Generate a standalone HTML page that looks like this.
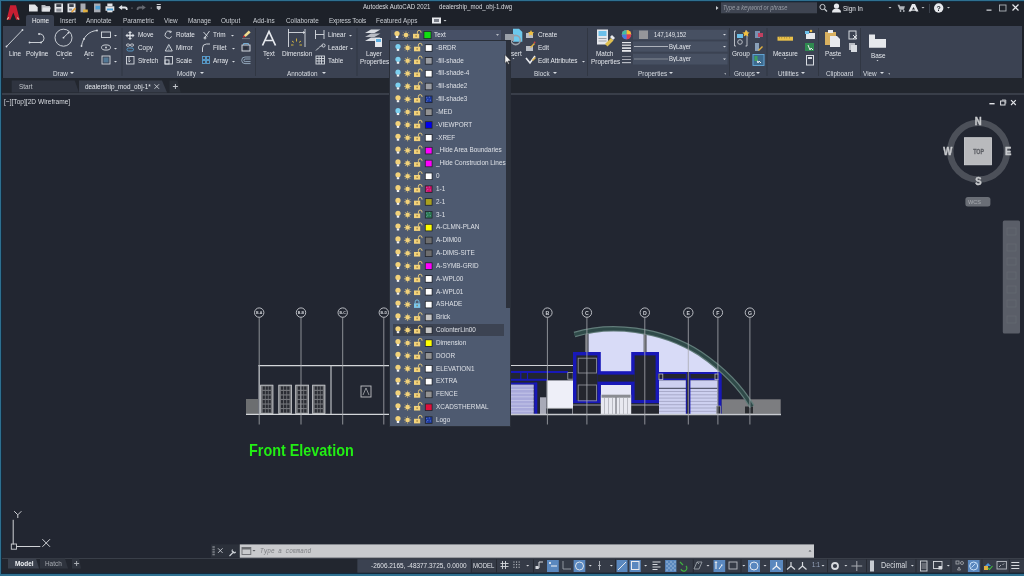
<!DOCTYPE html>
<html><head><meta charset="utf-8">
<style>
*{margin:0;padding:0;box-sizing:border-box}
html,body{width:1024px;height:576px;overflow:hidden;background:#1d2129}
body{font-family:"Liberation Sans",sans-serif;color:#e0e3e8;position:relative}
.a{position:absolute}
.t,.rl,.pl{will-change:transform;transform-origin:50% 50%}
.t{position:absolute;white-space:nowrap;line-height:1;transform:scaleY(1.15)}
svg{position:absolute;overflow:visible}
</style></head><body>
<!-- frame borders -->
<div class="a" style="left:0;top:0;width:1024px;height:576px;background:#1d2129"></div>

<!-- ribbon panel -->
<div class="a" id="ribbon" style="left:3px;top:26px;width:1019px;height:52px;background:#3b4252"></div>
<!-- home tab -->
<div class="a" style="left:26px;top:15px;width:28px;height:12px;background:#3b4252;border-radius:2px 2px 0 0"></div>

<!-- file tab row -->
<div class="a" style="left:2px;top:78px;width:1022px;height:15px;background:#22262e"></div>
<svg style="left:0;top:0" width="200" height="96">
<path d="M11.7 80.4h63l4.3 12.1h-67.3z" fill="#2f3440"/>
<path d="M79 80.4h83l5 12.1h-88z" fill="#383e4b"/>
<path d="M169.5 80.4h8l3.2 12.1h-11.2z" fill="#2b3039"/>
<path d="M154.5 84.3l4.5 4.5M159 84.3l-4.5 4.5" stroke="#d0d4da" stroke-width="0.9"/>
<path d="M175.4 84v5M172.9 86.5h5" stroke="#c0c4ca" stroke-width="1"/>
</svg>
<div class="t" style="left:19px;top:83.6px;font-size:6.4px;color:#c0c4ca">Start</div>
<div class="t" style="left:85px;top:83.6px;font-size:6.4px;color:#e6e9ee">dealership_mod_obj-1*</div>
<div class="a" style="left:2px;top:92.5px;width:1022px;height:2px;background:#393e49"></div>

<!-- viewport -->
<div class="a" id="vp" style="left:2px;top:94.5px;width:1022px;height:463px;background:#222631"></div>
<div class="t" style="left:3.7px;top:98.8px;font-size:6.6px;color:#d8dbe0">[−][Top][2D Wireframe]</div>
<!-- VIEWPORT CONTENT -->
<svg style="left:0;top:0" width="1024" height="576">
<rect x="246" y="399" width="12" height="15" fill="#6c6e70"/>
<path d="M258.5 365.6H392" stroke="#d4d6da" stroke-width="1.4"/>
<path d="M246 414.4H392" stroke="#d4d6da" stroke-width="1.4"/>
<path d="M259.2 365V414M331 365V414" stroke="#c8cacf" stroke-width="1.1"/>
<rect x="260.2" y="384.8" width="13.1" height="29" fill="#74767b"/>
<rect x="260.6" y="385.2" width="12.3" height="28.4" fill="none" stroke="#c4c6ca" stroke-width="0.8"/>
<rect x="262.70" y="386.40" width="2.17" height="3.4" fill="#2a2c33"/>
<rect x="262.70" y="390.95" width="2.17" height="3.4" fill="#2a2c33"/>
<rect x="262.70" y="395.50" width="2.17" height="3.4" fill="#2a2c33"/>
<rect x="262.70" y="400.05" width="2.17" height="3.4" fill="#2a2c33"/>
<rect x="262.70" y="404.60" width="2.17" height="3.4" fill="#2a2c33"/>
<rect x="262.70" y="409.15" width="2.17" height="3.4" fill="#2a2c33"/>
<rect x="265.67" y="386.40" width="2.17" height="3.4" fill="#2a2c33"/>
<rect x="265.67" y="390.95" width="2.17" height="3.4" fill="#2a2c33"/>
<rect x="265.67" y="395.50" width="2.17" height="3.4" fill="#2a2c33"/>
<rect x="265.67" y="400.05" width="2.17" height="3.4" fill="#2a2c33"/>
<rect x="265.67" y="404.60" width="2.17" height="3.4" fill="#2a2c33"/>
<rect x="265.67" y="409.15" width="2.17" height="3.4" fill="#2a2c33"/>
<rect x="268.63" y="386.40" width="2.17" height="3.4" fill="#2a2c33"/>
<rect x="268.63" y="390.95" width="2.17" height="3.4" fill="#2a2c33"/>
<rect x="268.63" y="395.50" width="2.17" height="3.4" fill="#2a2c33"/>
<rect x="268.63" y="400.05" width="2.17" height="3.4" fill="#2a2c33"/>
<rect x="268.63" y="404.60" width="2.17" height="3.4" fill="#2a2c33"/>
<rect x="268.63" y="409.15" width="2.17" height="3.4" fill="#2a2c33"/>
<rect x="278.4" y="384.8" width="13.6" height="29" fill="#74767b"/>
<rect x="278.8" y="385.2" width="12.8" height="28.4" fill="none" stroke="#c4c6ca" stroke-width="0.8"/>
<rect x="280.90" y="386.40" width="2.33" height="3.4" fill="#2a2c33"/>
<rect x="280.90" y="390.95" width="2.33" height="3.4" fill="#2a2c33"/>
<rect x="280.90" y="395.50" width="2.33" height="3.4" fill="#2a2c33"/>
<rect x="280.90" y="400.05" width="2.33" height="3.4" fill="#2a2c33"/>
<rect x="280.90" y="404.60" width="2.33" height="3.4" fill="#2a2c33"/>
<rect x="280.90" y="409.15" width="2.33" height="3.4" fill="#2a2c33"/>
<rect x="284.03" y="386.40" width="2.33" height="3.4" fill="#2a2c33"/>
<rect x="284.03" y="390.95" width="2.33" height="3.4" fill="#2a2c33"/>
<rect x="284.03" y="395.50" width="2.33" height="3.4" fill="#2a2c33"/>
<rect x="284.03" y="400.05" width="2.33" height="3.4" fill="#2a2c33"/>
<rect x="284.03" y="404.60" width="2.33" height="3.4" fill="#2a2c33"/>
<rect x="284.03" y="409.15" width="2.33" height="3.4" fill="#2a2c33"/>
<rect x="287.17" y="386.40" width="2.33" height="3.4" fill="#2a2c33"/>
<rect x="287.17" y="390.95" width="2.33" height="3.4" fill="#2a2c33"/>
<rect x="287.17" y="395.50" width="2.33" height="3.4" fill="#2a2c33"/>
<rect x="287.17" y="400.05" width="2.33" height="3.4" fill="#2a2c33"/>
<rect x="287.17" y="404.60" width="2.33" height="3.4" fill="#2a2c33"/>
<rect x="287.17" y="409.15" width="2.33" height="3.4" fill="#2a2c33"/>
<rect x="295.3" y="384.8" width="13.7" height="29" fill="#74767b"/>
<rect x="295.7" y="385.2" width="12.9" height="28.4" fill="none" stroke="#c4c6ca" stroke-width="0.8"/>
<rect x="297.80" y="386.40" width="2.37" height="3.4" fill="#2a2c33"/>
<rect x="297.80" y="390.95" width="2.37" height="3.4" fill="#2a2c33"/>
<rect x="297.80" y="395.50" width="2.37" height="3.4" fill="#2a2c33"/>
<rect x="297.80" y="400.05" width="2.37" height="3.4" fill="#2a2c33"/>
<rect x="297.80" y="404.60" width="2.37" height="3.4" fill="#2a2c33"/>
<rect x="297.80" y="409.15" width="2.37" height="3.4" fill="#2a2c33"/>
<rect x="300.97" y="386.40" width="2.37" height="3.4" fill="#2a2c33"/>
<rect x="300.97" y="390.95" width="2.37" height="3.4" fill="#2a2c33"/>
<rect x="300.97" y="395.50" width="2.37" height="3.4" fill="#2a2c33"/>
<rect x="300.97" y="400.05" width="2.37" height="3.4" fill="#2a2c33"/>
<rect x="300.97" y="404.60" width="2.37" height="3.4" fill="#2a2c33"/>
<rect x="300.97" y="409.15" width="2.37" height="3.4" fill="#2a2c33"/>
<rect x="304.13" y="386.40" width="2.37" height="3.4" fill="#2a2c33"/>
<rect x="304.13" y="390.95" width="2.37" height="3.4" fill="#2a2c33"/>
<rect x="304.13" y="395.50" width="2.37" height="3.4" fill="#2a2c33"/>
<rect x="304.13" y="400.05" width="2.37" height="3.4" fill="#2a2c33"/>
<rect x="304.13" y="404.60" width="2.37" height="3.4" fill="#2a2c33"/>
<rect x="304.13" y="409.15" width="2.37" height="3.4" fill="#2a2c33"/>
<rect x="312.2" y="384.8" width="13.1" height="29" fill="#74767b"/>
<rect x="312.6" y="385.2" width="12.3" height="28.4" fill="none" stroke="#c4c6ca" stroke-width="0.8"/>
<rect x="314.70" y="386.40" width="2.17" height="3.4" fill="#2a2c33"/>
<rect x="314.70" y="390.95" width="2.17" height="3.4" fill="#2a2c33"/>
<rect x="314.70" y="395.50" width="2.17" height="3.4" fill="#2a2c33"/>
<rect x="314.70" y="400.05" width="2.17" height="3.4" fill="#2a2c33"/>
<rect x="314.70" y="404.60" width="2.17" height="3.4" fill="#2a2c33"/>
<rect x="314.70" y="409.15" width="2.17" height="3.4" fill="#2a2c33"/>
<rect x="317.67" y="386.40" width="2.17" height="3.4" fill="#2a2c33"/>
<rect x="317.67" y="390.95" width="2.17" height="3.4" fill="#2a2c33"/>
<rect x="317.67" y="395.50" width="2.17" height="3.4" fill="#2a2c33"/>
<rect x="317.67" y="400.05" width="2.17" height="3.4" fill="#2a2c33"/>
<rect x="317.67" y="404.60" width="2.17" height="3.4" fill="#2a2c33"/>
<rect x="317.67" y="409.15" width="2.17" height="3.4" fill="#2a2c33"/>
<rect x="320.63" y="386.40" width="2.17" height="3.4" fill="#2a2c33"/>
<rect x="320.63" y="390.95" width="2.17" height="3.4" fill="#2a2c33"/>
<rect x="320.63" y="395.50" width="2.17" height="3.4" fill="#2a2c33"/>
<rect x="320.63" y="400.05" width="2.17" height="3.4" fill="#2a2c33"/>
<rect x="320.63" y="404.60" width="2.17" height="3.4" fill="#2a2c33"/>
<rect x="320.63" y="409.15" width="2.17" height="3.4" fill="#2a2c33"/>
<rect x="361" y="386" width="10" height="11" fill="none" stroke="#c0c2c6" stroke-width="0.9"/>
<path d="M363 395l3-7 3 7" fill="none" stroke="#c0c2c6" stroke-width="0.7"/>
<defs><clipPath id="vault"><path d="M574.5 334.5 C610 323.5, 660 328, 700 353.5 C725 370.5, 742 389.5, 752 406.5 L752 420 L574.5 420 Z"/></clipPath></defs>
<rect x="588.5" y="320" width="140" height="52" fill="#d8dbf7" clip-path="url(#vault)"/>
<path d="M510 365.5H573.5" stroke="#d0d2d6" stroke-width="1.2"/>
<rect x="510" y="371" width="58" height="2" fill="#1818b8"/>
<rect x="510" y="378.8" width="37" height="2" fill="#1818b8"/>
<path d="M520.8 372V380M527.5 372V380" stroke="#1818b8" stroke-width="1.2"/>
<rect x="567.8" y="372.6" width="5.4" height="6.6" fill="none" stroke="#a8abb0" stroke-width="0.8"/>
<rect x="510" y="384.3" width="23.7" height="29.9" fill="#a9aadb"/>
<path d="M510 386.0H533.7" stroke="#d8d9f2" stroke-width="0.8" opacity="0.7"/>
<path d="M510 389.6H533.7" stroke="#d8d9f2" stroke-width="0.8" opacity="0.7"/>
<path d="M510 393.2H533.7" stroke="#d8d9f2" stroke-width="0.8" opacity="0.7"/>
<path d="M510 396.8H533.7" stroke="#d8d9f2" stroke-width="0.8" opacity="0.7"/>
<path d="M510 400.4H533.7" stroke="#d8d9f2" stroke-width="0.8" opacity="0.7"/>
<path d="M510 404.0H533.7" stroke="#d8d9f2" stroke-width="0.8" opacity="0.7"/>
<path d="M510 407.6H533.7" stroke="#d8d9f2" stroke-width="0.8" opacity="0.7"/>
<path d="M510 411.2H533.7" stroke="#d8d9f2" stroke-width="0.8" opacity="0.7"/>
<rect x="510" y="382.6" width="27" height="1.8" fill="#1818b8"/>
<rect x="534.3" y="382.6" width="3" height="31.6" fill="#1818b8"/>
<rect x="540" y="397.3" width="6.2" height="16.7" fill="#a8aab8"/>
<rect x="546.7" y="380.4" width="26.5" height="27.6" fill="#eeeff8"/>
<path d="M546.7 408.2H573.2" stroke="#d0d2d6" stroke-width="0.9"/>
<path d="M572.7 408V414" stroke="#c0c2c6" stroke-width="0.8"/>
<rect x="585" y="334" width="2.6" height="18.5" fill="#6a6c72"/>
<rect x="643.6" y="333" width="3" height="20" fill="#55575d"/>
<rect x="600.8" y="385" width="30.4" height="10" fill="#e6e7f6"/>
<rect x="573" y="352" width="27.8" height="51.4" fill="#1818b8"/>
<rect x="576.4" y="355.4" width="21.0" height="44.6" fill="#24262e"/>
<rect x="631.2" y="352" width="27.8" height="51.4" fill="#1818b8"/>
<rect x="634.6" y="355.4" width="21.0" height="44.6" fill="#24262e"/>
<rect x="598.6" y="371.2" width="34.8" height="13.8" fill="#1818b8"/>
<rect x="597.4" y="374.6" width="37.2" height="7" fill="#24262e"/>
<rect x="578.2" y="358.2" width="18.3" height="14.8" fill="none" stroke="#8c8e94" stroke-width="0.9"/>
<rect x="578.2" y="385" width="18.3" height="15.8" fill="none" stroke="#8c8e94" stroke-width="0.9"/>
<rect x="573" y="403.4" width="86" height="10.6" fill="#24262e"/>
<path d="M573 405H600.8M631.2 405H659" stroke="#a8aab0" stroke-width="0.9"/>
<rect x="600.8" y="394.7" width="30.4" height="19.3" fill="#e8e9f0"/>
<rect x="601.5" y="394.7" width="29" height="3" fill="#8a8c92"/>
<path d="M604.5 398V414" stroke="#9a9ca4" stroke-width="0.6"/>
<path d="M608.5 398V414" stroke="#9a9ca4" stroke-width="0.6"/>
<path d="M612.5 398V414" stroke="#9a9ca4" stroke-width="0.6"/>
<path d="M616 398V414" stroke="#9a9ca4" stroke-width="0.6"/>
<path d="M619.5 398V414" stroke="#9a9ca4" stroke-width="0.6"/>
<path d="M623.5 398V414" stroke="#9a9ca4" stroke-width="0.6"/>
<path d="M627.5 398V414" stroke="#9a9ca4" stroke-width="0.6"/>
<path d="M616 397V414" stroke="#70727a" stroke-width="1"/>
<rect x="658" y="372" width="63" height="8.3" fill="#1818b8"/>
<rect x="658" y="374" width="63" height="4.5" fill="#24262e"/>
<rect x="659" y="374" width="3.8" height="5.6" fill="none" stroke="#b8bac0" stroke-width="0.8"/>
<rect x="715" y="374" width="4" height="5.6" fill="none" stroke="#b8bac0" stroke-width="0.8"/>
<rect x="659" y="380.3" width="58.6" height="33.9" fill="#cdd0f0"/>
<path d="M659 388.3H717.6" stroke="#3a3c50" stroke-width="1"/>
<path d="M659 391.5H717.6" stroke="#8e90b0" stroke-width="0.6"/>
<path d="M659 394.8H717.6" stroke="#8e90b0" stroke-width="0.6"/>
<path d="M659 398.1H717.6" stroke="#8e90b0" stroke-width="0.6"/>
<path d="M659 401.4H717.6" stroke="#8e90b0" stroke-width="0.6"/>
<path d="M659 404.7H717.6" stroke="#8e90b0" stroke-width="0.6"/>
<path d="M659 408.0H717.6" stroke="#8e90b0" stroke-width="0.6"/>
<path d="M659 411.3H717.6" stroke="#8e90b0" stroke-width="0.6"/>
<rect x="685.8" y="372" width="4.6" height="42" fill="#1818b8"/>
<rect x="686.8" y="372" width="2.6" height="42" fill="#24262e"/>
<rect x="718.4" y="371.6" width="3.3" height="42.4" fill="#1818b8"/>
<rect x="716.5" y="406" width="4" height="8" fill="#24262e" stroke="#b0b2b8" stroke-width="0.6"/>
<rect x="721.7" y="399.3" width="59" height="14.6" fill="#7c7d80"/>
<rect x="745" y="406.5" width="8" height="7" fill="#2a2c30"/>
<path d="M574.5 334.5 C610 323.5, 660 328, 700 353.5 C725 370.5, 742 389.5, 752 406.5" fill="none" stroke="#627c7a" stroke-width="5.6"/>
<path d="M574.5 334.5 C610 323.5, 660 328, 700 353.5 C725 370.5, 742 389.5, 752 406.5" fill="none" stroke="#2f4a49" stroke-width="3.2"/>
<path d="M510 414.5H781" stroke="#c8cacf" stroke-width="1.3"/>
<path d="M259.2 317.5V424.5" stroke="#a8abb0" stroke-width="0.8"/>
<circle cx="259.2" cy="312.6" r="4.7" fill="none" stroke="#c8cbd0" stroke-width="0.9"/>
<text x="259.2" y="314.0" font-size="3.6" text-anchor="middle" fill="#d0d3d8" font-family="Liberation Sans" font-weight="bold">B-A</text>
<path d="M301 317.5V424.5" stroke="#a8abb0" stroke-width="0.8"/>
<circle cx="301" cy="312.6" r="4.7" fill="none" stroke="#c8cbd0" stroke-width="0.9"/>
<text x="301" y="314.0" font-size="3.6" text-anchor="middle" fill="#d0d3d8" font-family="Liberation Sans" font-weight="bold">B-B</text>
<path d="M342.7 317.5V424.5" stroke="#a8abb0" stroke-width="0.8"/>
<circle cx="342.7" cy="312.6" r="4.7" fill="none" stroke="#c8cbd0" stroke-width="0.9"/>
<text x="342.7" y="314.0" font-size="3.6" text-anchor="middle" fill="#d0d3d8" font-family="Liberation Sans" font-weight="bold">B-C</text>
<path d="M383.8 317.5V424.5" stroke="#a8abb0" stroke-width="0.8"/>
<circle cx="383.8" cy="312.6" r="4.7" fill="none" stroke="#c8cbd0" stroke-width="0.9"/>
<text x="383.8" y="314.0" font-size="3.6" text-anchor="middle" fill="#d0d3d8" font-family="Liberation Sans" font-weight="bold">B-D</text>
<path d="M547.4 317.5V424.5" stroke="#a8abb0" stroke-width="0.8"/>
<circle cx="547.4" cy="312.6" r="4.7" fill="none" stroke="#c8cbd0" stroke-width="0.9"/>
<text x="547.4" y="314.5" font-size="5.2" text-anchor="middle" fill="#d0d3d8" font-family="Liberation Sans" font-weight="bold">B</text>
<path d="M586.9 317.5V424.5" stroke="#a8abb0" stroke-width="0.8"/>
<circle cx="586.9" cy="312.6" r="4.7" fill="none" stroke="#c8cbd0" stroke-width="0.9"/>
<text x="586.9" y="314.5" font-size="5.2" text-anchor="middle" fill="#d0d3d8" font-family="Liberation Sans" font-weight="bold">C</text>
<path d="M644.8 317.5V424.5" stroke="#a8abb0" stroke-width="0.8"/>
<circle cx="644.8" cy="312.6" r="4.7" fill="none" stroke="#c8cbd0" stroke-width="0.9"/>
<text x="644.8" y="314.5" font-size="5.2" text-anchor="middle" fill="#d0d3d8" font-family="Liberation Sans" font-weight="bold">D</text>
<path d="M688.3 317.5V424.5" stroke="#a8abb0" stroke-width="0.8"/>
<circle cx="688.3" cy="312.6" r="4.7" fill="none" stroke="#c8cbd0" stroke-width="0.9"/>
<text x="688.3" y="314.5" font-size="5.2" text-anchor="middle" fill="#d0d3d8" font-family="Liberation Sans" font-weight="bold">E</text>
<path d="M717.9 317.5V424.5" stroke="#a8abb0" stroke-width="0.8"/>
<circle cx="717.9" cy="312.6" r="4.7" fill="none" stroke="#c8cbd0" stroke-width="0.9"/>
<text x="717.9" y="314.5" font-size="5.2" text-anchor="middle" fill="#d0d3d8" font-family="Liberation Sans" font-weight="bold">F</text>
<path d="M749.9 317.5V424.5" stroke="#a8abb0" stroke-width="0.8"/>
<circle cx="749.9" cy="312.6" r="4.7" fill="none" stroke="#c8cbd0" stroke-width="0.9"/>
<text x="749.9" y="314.5" font-size="5.2" text-anchor="middle" fill="#d0d3d8" font-family="Liberation Sans" font-weight="bold">G</text>
<path d="M13.2 519.8V544.5M16.5 546.5H40.3" stroke="#d0d2d6" stroke-width="1"/>
<rect x="11.3" y="544" width="5.2" height="5.2" fill="none" stroke="#d0d2d6" stroke-width="0.9"/>
<path d="M14.2 511.2l3.6 3.6 3.6-3.6M17.8 514.8v3.2" fill="none" stroke="#d0d2d6" stroke-width="1"/>
<path d="M42.4 539.2l7.6 7.6M50 539.2l-7.6 7.6" stroke="#d0d2d6" stroke-width="1"/>
<circle cx="978.6" cy="151.2" r="28.3" fill="none" stroke="#4c5059" stroke-width="6.4"/>
<rect x="964.4" y="137.7" width="27.1" height="27.1" fill="#b9babd" stroke="#d4d5d8" stroke-width="0.8"/>
<text transform="translate(978.6,154.4) scale(0.95,1.35)" font-size="5.6" text-anchor="middle" fill="#5e6066" stroke="#5e6066" stroke-width="0.2" font-family="Liberation Sans" font-weight="bold">TOP</text>
<text transform="translate(978.2,125.3) scale(1.0,1.12)" font-size="9.6" text-anchor="middle" fill="#c8cacd" stroke="#c8cacd" stroke-width="0.35" font-family="Liberation Sans" font-weight="bold">N</text>
<text transform="translate(978.4,185.2) scale(1.0,1.12)" font-size="9.6" text-anchor="middle" fill="#c8cacd" stroke="#c8cacd" stroke-width="0.35" font-family="Liberation Sans" font-weight="bold">S</text>
<text transform="translate(947.8,154.8) scale(1.0,1.12)" font-size="9.6" text-anchor="middle" fill="#c8cacd" stroke="#c8cacd" stroke-width="0.35" font-family="Liberation Sans" font-weight="bold">W</text>
<text transform="translate(1008.3,154.8) scale(1.0,1.12)" font-size="9.6" text-anchor="middle" fill="#c8cacd" stroke="#c8cacd" stroke-width="0.35" font-family="Liberation Sans" font-weight="bold">E</text>
<rect x="965.4" y="197" width="25" height="9.5" rx="2.5" fill="#6a6e76"/>
<text x="974.5" y="204" font-size="5.6" text-anchor="middle" fill="#a8abb0" font-family="Liberation Sans">WCS</text>
<rect x="989.4" y="103" width="5.2" height="1.4" fill="#e0e2e6"/>
<rect x="1000.6" y="101" width="4.4" height="4" fill="none" stroke="#e0e2e6" stroke-width="1"/><path d="M1002 100h3.8v3.6" fill="none" stroke="#e0e2e6" stroke-width="0.8"/>
<path d="M1011 100.2l4.8 4.8M1015.8 100.2l-4.8 4.8" stroke="#e6e8ec" stroke-width="1.1"/>
<rect x="1002.8" y="220.4" width="17.2" height="113" rx="1.5" fill="#5a5e68"/>
<rect x="1007" y="228" width="9" height="7" fill="none" stroke="#666a72" stroke-width="0.7"/>
<rect x="1007" y="244" width="9" height="7" fill="none" stroke="#666a72" stroke-width="0.7"/>
<rect x="1007" y="258" width="9" height="7" fill="none" stroke="#666a72" stroke-width="0.7"/>
<rect x="1007" y="272" width="9" height="7" fill="none" stroke="#666a72" stroke-width="0.7"/>
<rect x="1007" y="286" width="9" height="7" fill="none" stroke="#666a72" stroke-width="0.7"/>
<rect x="1007" y="300" width="9" height="7" fill="none" stroke="#666a72" stroke-width="0.7"/>
<rect x="1007" y="316" width="9" height="7" fill="none" stroke="#666a72" stroke-width="0.7"/>
</svg>
<div class="t" style="left:248.8px;top:442.9px;font-size:14.4px;font-weight:bold;color:#22ee14">Front Elevation</div>
<!-- END VP -->
<!-- STATUS BAR -->
<div class="a" style="left:2px;top:557.5px;width:1022px;height:16px;background:#22262f"></div>
<div class="a" style="left:2px;top:557.8px;width:1022px;height:1px;background:#3a3f49"></div>
<svg style="left:0;top:0" width="1024" height="576">
<path d="M8 558.5h28l3 10h-31z" fill="#3a404c"/>
<path d="M40 558.5h25l3 10h-28z" fill="#2f343e"/>
<path d="M72 558.5h7l2 10h-9z" fill="#2f343e"/>
<path d="M76.6 561v5M74.1 563.5h5" stroke="#a8acb2" stroke-width="1"/>
<rect x="211" y="544.4" width="29" height="13.3" fill="#2b303a"/>
<g fill="#7a7e86"><rect x="212.4" y="546.2" width="2.4" height="1.6"/><rect x="212.4" y="548.7" width="2.4" height="1.6"/><rect x="212.4" y="551.2" width="2.4" height="1.6"/><rect x="212.4" y="553.7" width="2.4" height="1.6"/></g>
<path d="M218 548.3l4.6 4.6M222.6 548.3l-4.6 4.6" stroke="#c8ccd2" stroke-width="0.9"/>
<path d="M229.5 556l4.5-4.5M232.5 549.5a2 2 0 1 0 3.2 2.4" fill="none" stroke="#d0d4da" stroke-width="1.1"/>
<rect x="239.8" y="544.4" width="574.2" height="13.3" fill="#c9cacd"/>
<rect x="242" y="547.5" width="8.8" height="7" fill="none" stroke="#6a6c70" stroke-width="0.9"/><rect x="242" y="547.5" width="8.8" height="2" fill="#6a6c70"/>
<path d="M252.5 550h3l-1.5 1.5z" fill="#55575c"/>
<path d="M808.5 551.5h3l-1.5-1.5z" fill="#55575c"/>
<rect x="357.5" y="559.3" width="666.5" height="13.2" fill="#353b47"/>
<rect x="470.8" y="559.3" width="1" height="13.2" fill="#262a33"/>
<rect x="496" y="559.3" width="1" height="13.2" fill="#262a33"/>
<rect x="533" y="559.3" width="1" height="13.2" fill="#262a33"/>
<rect x="615" y="559.3" width="1" height="13.2" fill="#262a33"/>
<rect x="692.8" y="559.3" width="1" height="13.2" fill="#262a33"/>
<rect x="740.5" y="559.3" width="1" height="13.2" fill="#262a33"/>
<rect x="786" y="559.3" width="1" height="13.2" fill="#262a33"/>
<rect x="827" y="559.3" width="1" height="13.2" fill="#262a33"/>
<rect x="866" y="559.3" width="1" height="13.2" fill="#262a33"/>
<rect x="915.5" y="559.3" width="1" height="13.2" fill="#262a33"/>
<rect x="950.5" y="559.3" width="1" height="13.2" fill="#262a33"/>
<rect x="981.5" y="559.3" width="1" height="13.2" fill="#262a33"/>
<rect x="1008.8" y="559.3" width="1" height="13.2" fill="#262a33"/>
<rect x="357.5" y="559.3" width="113" height="13.2" fill="#3b4251"/>
<rect x="547" y="560" width="11.8" height="12" fill="#5a88bf"/>
<rect x="573.6" y="560" width="11.7" height="12" fill="#5a88bf"/>
<rect x="616.6" y="560" width="10.9" height="12" fill="#5a88bf"/>
<rect x="629.5" y="560" width="11.3" height="12" fill="#5a88bf"/>
<rect x="665.1" y="560" width="11.3" height="12" fill="#5a88bf"/>
<rect x="713.5" y="560" width="11.7" height="12" fill="#5a88bf"/>
<rect x="748" y="560" width="12.0" height="12" fill="#5a88bf"/>
<rect x="770" y="560" width="13.0" height="12" fill="#5a88bf"/>
<rect x="967.9" y="560" width="11.7" height="12" fill="#5a88bf"/>
<path d="M500.5 563.5h8M500.5 566.5h8M502.5 561v8M505.5 561v8" stroke="#d6d9de" stroke-width="0.9"/>
<g fill="#c0c4ca"><rect x="513.4" y="561.5" width="1.1" height="1.1"/><rect x="513.4" y="564.1" width="1.1" height="1.1"/><rect x="513.4" y="566.7" width="1.1" height="1.1"/><rect x="516.0" y="561.5" width="1.1" height="1.1"/><rect x="516.0" y="564.1" width="1.1" height="1.1"/><rect x="516.0" y="566.7" width="1.1" height="1.1"/><rect x="518.6" y="561.5" width="1.1" height="1.1"/><rect x="518.6" y="564.1" width="1.1" height="1.1"/><rect x="518.6" y="566.7" width="1.1" height="1.1"/></g>
<path d="M526.2 565h3l-1.5 1.5z" fill="#d6d9de"/>
<path d="M588.8 565h3l-1.5 1.5z" fill="#d6d9de"/>
<path d="M609.9 565h3l-1.5 1.5z" fill="#d6d9de"/>
<path d="M644.1 565h3l-1.5 1.5z" fill="#d6d9de"/>
<path d="M706.5 565h3l-1.5 1.5z" fill="#d6d9de"/>
<path d="M742.3 565h3l-1.5 1.5z" fill="#d6d9de"/>
<path d="M763.5 565h3l-1.5 1.5z" fill="#d6d9de"/>
<path d="M821.5 565h3l-1.5 1.5z" fill="#d6d9de"/>
<path d="M844.4 565h3l-1.5 1.5z" fill="#d6d9de"/>
<path d="M910.9 565h3l-1.5 1.5z" fill="#d6d9de"/>
<path d="M946.8 565h3l-1.5 1.5z" fill="#d6d9de"/>
<path d="M536 568h3v-6h4" fill="none" stroke="#d6d9de" stroke-width="1"/><rect x="535.5" y="566" width="3" height="3" fill="#d6d9de"/>
<path d="M549 563h2M550 562v2M551 566h6" stroke="#f0f2f5" stroke-width="1.2"/>
<path d="M563 561v8h8" fill="none" stroke="#9aa0a8" stroke-width="0.9"/>
<circle cx="579.5" cy="566" r="4" fill="none" stroke="#dfe3e8" stroke-width="1"/>
<path d="M599.5 561v9M598 565.5h3" stroke="#b8bcc4" stroke-width="0.9"/>
<path d="M618 570l8-8" stroke="#e8eaee" stroke-width="1"/>
<rect x="631.5" y="561.5" width="7.5" height="8" fill="none" stroke="#e8eaee" stroke-width="1"/>
<path d="M652.5 562h8M652.5 564.5h5M652.5 567h8M652.5 569.5h5" stroke="#d6d9de" stroke-width="1"/>
<g fill="#dfe8f4"><rect x="666.5" y="561.5" width="1" height="1"/><rect x="666.5" y="565.5" width="1" height="1"/><rect x="666.5" y="569.5" width="1" height="1"/><rect x="668.5" y="563.5" width="1" height="1"/><rect x="668.5" y="567.5" width="1" height="1"/><rect x="670.5" y="561.5" width="1" height="1"/><rect x="670.5" y="565.5" width="1" height="1"/><rect x="670.5" y="569.5" width="1" height="1"/><rect x="672.5" y="563.5" width="1" height="1"/><rect x="672.5" y="567.5" width="1" height="1"/><rect x="674.5" y="561.5" width="1" height="1"/><rect x="674.5" y="565.5" width="1" height="1"/><rect x="674.5" y="569.5" width="1" height="1"/></g>
<path d="M680 562l3 3M681 569a3 3 0 1 0 5 -3" fill="none" stroke="#40b040" stroke-width="1.2"/>
<path d="M694 569l3-7h5l-3 7z M697 562l2 2" fill="none" stroke="#9aa0a8" stroke-width="0.9"/>
<path d="M716 569v-7M715 563l1-1.5 1 1.5M719 569l3-4M721 565h1.5" stroke="#f0f2f5" stroke-width="1"/>
<rect x="729" y="562" width="8" height="7" fill="none" stroke="#b8bcc4" stroke-width="0.9"/>
<circle cx="754" cy="566" r="4" fill="none" stroke="#e0e8f2" stroke-width="1"/>
<path d="M776.5 562v4l-4 3.5M776.5 566l4 3.5" fill="none" stroke="#f0f2f5" stroke-width="1.2"/>
<path d="M791 562v4l-4 3.5M791 566l4 3.5" fill="none" stroke="#d6d9de" stroke-width="1.2"/>
<path d="M802.5 562v4l-4 3.5M802.5 566l4 3.5" fill="none" stroke="#d6d9de" stroke-width="1.2"/>
<circle cx="835" cy="566" r="3" fill="none" stroke="#d6d9de" stroke-width="1.8"/>
<path d="M856.8 561v10M851.4 566h10.8" stroke="#a8acb2" stroke-width="1"/>
<rect x="870" y="560.5" width="4" height="11" fill="#c8ccd2"/>
<rect x="920.5" y="561" width="6.5" height="10" fill="none" stroke="#d6d9de" stroke-width="0.9"/><path d="M921.5 564h5M921.5 566h5M921.5 568h5" stroke="#d6d9de" stroke-width="0.6"/>
<rect x="933.5" y="561.5" width="8.5" height="7" fill="none" stroke="#d6d9de" stroke-width="0.9"/><rect x="938.5" y="566" width="3.5" height="3.5" fill="#d6d9de"/>
<rect x="956" y="561" width="3" height="3" fill="none" stroke="#a8acb2" stroke-width="0.8"/><circle cx="962" cy="563" r="1.5" fill="none" stroke="#a8acb2" stroke-width="0.8"/><path d="M957.5 570l1.5-3 1.5 3z" fill="none" stroke="#a8acb2" stroke-width="0.8"/>
<circle cx="973.7" cy="566" r="4" fill="none" stroke="#c8e0f8" stroke-width="1"/><path d="M971.5 567.5l4-4" stroke="#c8e0f8" stroke-width="0.9"/>
<path d="M985 566l3-3 3 3z" fill="#4a90d8"/><rect x="984" y="566" width="4" height="4" fill="#e0b040"/><path d="M988 568l1.5 1.5 3-3.5" stroke="#40c040" stroke-width="1.1" fill="none"/>
<rect x="997" y="561.5" width="9.4" height="7.5" fill="none" stroke="#b8bcc4" stroke-width="0.9"/><path d="M999 567l2-2M1004 563.5l-1.5 1.5" stroke="#b8bcc4" stroke-width="0.9"/>
<path d="M1011.3 562.5h8M1011.3 565.5h8M1011.3 568.5h8" stroke="#d6d9de" stroke-width="1"/>
</svg>
<div class="t" style="left:15px;top:560.5px;font-size:6.4px;font-weight:bold;color:#f0f2f5">Model</div>
<div class="t" style="left:45px;top:560.5px;font-size:6.4px;color:#a8acb2">Hatch</div>
<div class="t" style="left:260px;top:548.6px;font-size:6.1px;font-style:italic;font-family:'Liberation Mono';color:#7c7e82">Type a command</div>
<div class="t" style="left:370.8px;top:562.6px;font-size:6.45px;color:#e0e3e8">-2606.2165, -48377.3725, 0.0000</div>
<div class="t" style="left:472.7px;top:562.6px;font-size:6px;color:#e0e3e8">MODEL</div>
<div class="t" style="left:812.3px;top:562.8px;font-size:5.8px;color:#9aa8c0">1:1</div>
<div class="t" style="left:880.8px;top:562.3px;font-size:7.2px;color:#d8dbe0">Decimal</div>
<!-- END SB -->
<!-- TITLE BAR -->
<div class="t" style="left:363px;top:4px;font-size:6.1px;color:#d8dbe0">Autodesk AutoCAD 2021</div>
<div class="t" style="left:438.5px;top:4px;font-size:6.1px;color:#d8dbe0">dealership_mod_obj-1.dwg</div>
<!-- logo A -->
<svg style="left:0;top:0" width="30" height="26" viewBox="0 0 30 26">
<path d="M10.2 5.2H16L19.8 19.8H16.2L13.3 12.5L10.4 19.8H6.6Z" fill="#c81e32"/>
<path d="M7.2 19.5l1.6-2.2M18.8 19.5l-1.5-2" stroke="#d8c8a0" stroke-width="1.1"/>
</svg>
<!-- quick access icons -->
<svg style="left:0;top:0" width="170" height="16">
<g fill="#e2e4e8">
<path d="M29 4.5h6l2.7 2.7v4.3H29z"/>
<path d="M41.5 5h3.5l1 1h4v5.5h-8.5z" fill="#b9bcc2"/><path d="M42.8 7.5h8l-1.2 4h-7.5z" fill="#e2e4e8"/>
<rect x="54.5" y="3.5" width="8.5" height="8.8"/><rect x="56.3" y="4.2" width="5" height="2.8" fill="#3a3f49"/><rect x="56.3" y="8.6" width="5" height="3" fill="#8a8e96"/>
<rect x="67.5" y="3.5" width="8" height="8.8"/><rect x="69.2" y="4.2" width="4.5" height="2.8" fill="#3a3f49"/><path d="M71 11.5l4-4 1.2 1.2-4 4z" fill="#e0a040"/><rect x="69" y="8.6" width="3" height="2" fill="#8a8e96"/>
<rect x="80.5" y="3.5" width="5" height="8.8" fill="#a8acb4"/><path d="M83 9.5h4.8v2.8H83z" fill="#e0b040"/>
<rect x="94" y="3.5" width="6.5" height="8.8" fill="#a8acb4"/><rect x="95.5" y="5.8" width="4.5" height="3.6" fill="#4aa0d8"/>
<path d="M105.5 6.3h8.8v4.5h-8.8z"/><rect x="107.3" y="3.5" width="5.2" height="2.5"/><rect x="106.8" y="8.5" width="6.2" height="2.2" fill="#4aa0d8"/><rect x="107.3" y="10.5" width="5.2" height="1.8"/>
<path d="M118.5 7.6l3.6-2.6v1.6h3a2.5 2.5 0 0 1 2.5 2.5v.8h-1.6a1.4 1.4 0 0 0-1.4-1.4h-2.5v1.6z"/>
<circle cx="132" cy="8" r="0.6" fill="#9ea2aa"/>
<path d="M145.8 7.6l-3.6-2.6v1.6h-3a2.5 2.5 0 0 0-2.5 2.5v.8h1.6a1.4 1.4 0 0 1 1.4-1.4h2.5v1.6z" fill="#666a72"/>
<circle cx="151.2" cy="8" r="0.6" fill="#9ea2aa"/>
<path d="M156.7 4h4.1v1h-4.1z M156.7 6h4.1v2.5l-2 1.8-2.1-1.8z" fill="#c8cbd0"/>
</g>
</svg>
<!-- search -->
<svg style="left:0;top:0" width="1024" height="16">
<path d="M716 6l2.5 2-2.5 2z" fill="#c8cbd0"/>
<rect x="721" y="2.3" width="96" height="11" fill="#3f4552"/>
<circle cx="822.5" cy="7" r="2.6" fill="none" stroke="#c8cbd0" stroke-width="1"/><path d="M824.5 9l2.5 2.5" stroke="#c8cbd0" stroke-width="1.2"/>
<circle cx="836.5" cy="6" r="2.6" fill="#e6e8ec"/><path d="M832 12.5c0-3 2-4 4.5-4s4.5 1 4.5 4z" fill="#e6e8ec"/>
<path d="M888.5 7h3l-1.5 1.5z" fill="#c8cbd0"/>
<path d="M897.5 4.8h2l.6 1.4h4.8l-1 3.6h-4.2z" fill="#b0b4ba"/><circle cx="900.5" cy="11" r="0.9" fill="#b0b4ba"/><circle cx="903.8" cy="11" r="0.9" fill="#b0b4ba"/>
<path d="M912 4h3l3.5 7.5h-2.5l-2.5-4.5-2.5 4.5h-2.5z" fill="#e6e8ec"/><path d="M911 9.5h5v1.2h-5z" fill="#e6e8ec"/>
<path d="M921.5 7h3l-1.5 1.5z" fill="#c8cbd0"/>
<rect x="929" y="4" width="0.8" height="9" fill="#444a55"/>
<circle cx="938.7" cy="8" r="4.7" fill="#e6e8ec"/><text x="938.7" y="10.5" font-size="7" font-weight="bold" text-anchor="middle" fill="#1d2129" font-family="Liberation Sans">?</text>
<path d="M947 7h3l-1.5 1.5z" fill="#c8cbd0"/>
<rect x="986.5" y="9.5" width="5" height="1.3" fill="#c8cbd0"/>
<rect x="999.5" y="5" width="6.5" height="6" fill="none" stroke="#b0b4ba" stroke-width="0.9"/>
<path d="M1012.5 4.5l6 6M1018.5 4.5l-6 6" stroke="#e6e8ec" stroke-width="1.2"/>
</svg>
<div class="t" style="left:723px;top:5.6px;font-size:5.6px;font-style:italic;color:#9a9fa8">Type a keyword or phrase</div>
<div class="t" style="left:843px;top:6px;font-size:6.4px;color:#e0e3e8">Sign In</div>

<!-- RIBBON TABS -->
<div class="t" style="left:32px;top:18px;font-size:6.4px;color:#f0f2f5">Home</div>
<div class="t" style="left:59.5px;top:18px;font-size:6.4px;color:#c8ccd2">Insert</div>
<div class="t" style="left:86px;top:18px;font-size:6.4px;color:#c8ccd2">Annotate</div>
<div class="t" style="left:122.5px;top:18px;font-size:6.4px;color:#c8ccd2">Parametric</div>
<div class="t" style="left:164px;top:18px;font-size:6.4px;color:#c8ccd2">View</div>
<div class="t" style="left:187.5px;top:18px;font-size:6.4px;color:#c8ccd2">Manage</div>
<div class="t" style="left:221px;top:18px;font-size:6.4px;color:#c8ccd2">Output</div>
<div class="t" style="left:253px;top:18px;font-size:6.4px;color:#c8ccd2">Add-ins</div>
<div class="t" style="left:285.5px;top:18px;font-size:6.4px;color:#c8ccd2">Collaborate</div>
<div class="t" style="left:328.5px;top:18px;font-size:6.4px;letter-spacing:-0.2px;color:#c8ccd2">Express Tools</div>
<div class="t" style="left:376px;top:18px;font-size:6.4px;color:#c8ccd2">Featured Apps</div>
<svg style="left:0;top:0" width="460" height="26"><rect x="432" y="17.5" width="9" height="6" fill="#e6e8ec"/><rect x="434" y="19" width="5" height="3" fill="#7a7e88"/><path d="M443.5 20h3l-1.5 1.5z" fill="#c8cbd0"/></svg>


<!-- RIBBON CONTENT -->
<style>
.rl{position:absolute;white-space:nowrap;line-height:1;font-size:6.4px;color:#e4e7ec;transform:translateY(0.6px) scaleY(1.15)}
.pl{position:absolute;white-space:nowrap;line-height:1;font-size:6.4px;color:#d8dce2;transform:translateY(0.6px) scaleY(1.15)}
</style>
<svg style="left:0;top:0" width="1024" height="80">
<g fill="#313743">
<rect x="121.5" y="28" width="1" height="48"/>
<rect x="255" y="28" width="1" height="48"/>
<rect x="356.5" y="28" width="1" height="48"/>
<rect x="587" y="28" width="1" height="48"/>
<rect x="729" y="28" width="1" height="48"/>
<rect x="766.5" y="28" width="1" height="48"/>
<rect x="818" y="28" width="1" height="48"/>
<rect x="860" y="28" width="1" height="48"/>
</g>
<g fill="#d8dce2" stroke="none">
<!-- dropdown arrows for panel labels -->
<path d="M70 72h4l-2 2z"/><path d="M200 72h4l-2 2z"/><path d="M322 72h4l-2 2z"/><path d="M553 72h4l-2 2z"/><path d="M669 72h4l-2 2z"/><path d="M756 72h4l-2 2z"/><path d="M801 72h4l-2 2z"/><path d="M880 72h4l-2 2z"/>
<path d="M724 73l2 0l0 2z" fill="#9aa0a8"/><path d="M888 73l2 0l0 2z" fill="#9aa0a8"/>
<!-- small arrows under big buttons -->
<path d="M62.5 58h2l-1 1.2z"/><path d="M87 58h2l-1 1.2z"/><path d="M267 58h2l-1 1.2z"/><path d="M512.5 58h2l-1 1.2z"/><path d="M784 58h2l-1 1.2z"/><path d="M832 58h2l-1 1.2z"/><path d="M876.5 60h2l-1 1.2z"/>
<!-- split arrows -->
<path d="M114 35h3l-1.5 1.5z"/><path d="M114 48h3l-1.5 1.5z"/><path d="M114 61h3l-1.5 1.5z"/>
<path d="M231 35h3l-1.5 1.5z"/><path d="M232 48h3l-1.5 1.5z"/><path d="M232 61h3l-1.5 1.5z"/>
<path d="M349 35h3l-1.5 1.5z"/><path d="M350 48h3l-1.5 1.5z"/>
<path d="M582 61h3l-1.5 1.5z"/>
</g>
<g fill="none" stroke="#d8dce2" stroke-width="0.9">
<!-- Line -->
<path d="M6.5 46.5L22.5 30"/>
<!-- Polyline -->
<path d="M29.5 42.5h11.5a4.5 4.5 0 0 0 0-8.5h-2"/>
<!-- Circle -->
<circle cx="63.5" cy="37.7" r="8.5"/><path d="M63.5 37.7l5-5"/>
<!-- Arc -->
<path d="M81.5 46C83 37 89 31 97 30.5"/>
<!-- rect -->
<rect x="101.5" y="32" width="9" height="5.5"/>
<!-- ellipse -->
<ellipse cx="106" cy="47.5" rx="4.5" ry="2.6"/>
<!-- hatch -->
<rect x="102" y="56" width="8" height="8"/>
</g>
<g fill="#d8dce2">
<circle cx="6.5" cy="46.5" r="0.9"/><circle cx="22.5" cy="30" r="0.9"/>
<circle cx="29.5" cy="42.5" r="0.9"/><circle cx="41" cy="42.5" r="0.9"/><circle cx="39" cy="34" r="0.9"/>
<circle cx="63.5" cy="37.7" r="0.9"/><circle cx="68.5" cy="32.7" r="0.9"/>
<circle cx="81.5" cy="46" r="0.9"/><circle cx="84" cy="39" r="0.9"/><circle cx="97" cy="30.5" r="0.9"/>
<circle cx="106" cy="47.5" r="0.9"/>
</g>
<rect x="103.5" y="57.5" width="5" height="5" fill="#5d8fb0" opacity="0.7"/>
<!-- Modify icons -->
<g fill="#d8dce2">
<path d="M130 31l2 2h-1.3v1.8h1.8V33.5l2 2-2 2v-1.3h-1.8v1.8h1.3l-2 2-2-2h1.3v-1.8h-1.8v1.3l-2-2 2-2v1.3h1.8V33h-1.3z"/>
</g>
<g fill="none" stroke="#d8dce2" stroke-width="0.9">
<rect x="126.5" y="44" width="3" height="2.2" rx="1"/><rect x="130.5" y="44" width="3" height="2.2" rx="1"/>
<rect x="127" y="48" width="6.5" height="3" rx="1.5" stroke="#5aa0d0"/>
<rect x="126.5" y="56.5" width="7.5" height="7.5"/><path d="M129 57v5l1.5-1.5" />
<path d="M171.8 36.5A3.6 3.6 0 1 1 170.5 31.6"/><path d="M170 30.5l1.5 1.5-2 .7" />
<path d="M165.3 51h7l-3.5-6.5z"/><path d="M168.8 45.5v5" stroke="#9ab" stroke-dasharray="1 0.8"/>
<rect x="165" y="56.5" width="7.5" height="7.5"/><rect x="165" y="60" width="4" height="4"/>
<path d="M203.5 32l4 4.5M209.5 31l-5 7"/><circle cx="205" cy="38" r="1"/>
<path d="M202.5 52v-4a4 4 0 0 1 4-4h3.5"/>
<rect x="202.5" y="56.5" width="3" height="3" stroke="#5aa0d0"/><rect x="206.5" y="56.5" width="3" height="3" stroke="#5aa0d0"/><rect x="202.5" y="60.5" width="3" height="3" stroke="#5aa0d0"/><rect x="206.5" y="60.5" width="3" height="3" stroke="#5aa0d0"/>
<rect x="242" y="45" width="8" height="6" stroke="#e0e4ea"/><path d="M243.5 45v-1.5h5v1.5" stroke="#7ab8e0"/><rect x="243.5" y="46.5" width="4" height="3" fill="#2a2f38" stroke="none"/>
<path d="M250.5 57h-5.5a3.3 3.3 0 0 0 0 6.6h5.5M250.5 59h-5.3a1.3 1.3 0 0 0 0 2.6h5.3" stroke="#a8c0d4" stroke-width="0.8"/>
</g>
<path d="M243.8 35.3l5-4.7 1.8 1.8-5 4.7z" fill="#f0dc90"/><path d="M242.8 37.6l1-2.3 1.8 1.8z" fill="#e03030"/><path d="M242 38.6h8" stroke="#8a9098" stroke-width="0.7"/>
<!-- Text A -->
<path d="M262.5 45.5L269 31.5L275.5 45.5M264.8 40.5h8.4" fill="none" stroke="#e6e9ee" stroke-width="1.7"/>
<!-- Dimension -->
<g fill="none" stroke="#d8dce2" stroke-width="0.9">
<path d="M288.5 29v18M305 29v18M288.5 32.5h16.5"/>
<path d="M315.5 30v9M324 30v9M315.5 34.5h8.5"/>
<path d="M316 50.5l2.5-2.5c1-1 2-2 4-2.5"/><circle cx="323.5" cy="45.5" r="1.6"/>
<rect x="316" y="56" width="8.5" height="8"/><path d="M316 58.5h8.5M316 61h8.5M319 56v8M321.5 56v8"/>
</g>
<path d="M303 31l2 1.5-2 1.5z" fill="#d8dce2"/>
<g stroke="#e0c040" stroke-width="0.9"><path d="M296.5 38.5v3M292 41l2 1.5M301 41l-2 1.5M291 45h2.5M302 45h-2.5"/></g>
<!-- Layer Properties -->
<g fill="#d8dce2"><path d="M365 33l6-3.5 9.5 0-6 3.5z"/><path d="M365 37l6-3.5 9.5 0-6 3.5z" fill="#b8bcc4"/><path d="M365 41l6-3.5 9.5 0-6 3.5z"/></g>
<rect x="375" y="38" width="7" height="9" fill="#e6e8ec"/><rect x="376" y="39" width="5" height="3" fill="#5aaee0"/>
</svg>
<div class="rl" style="left:8.5px;top:50px">Line</div>
<div class="rl" style="left:26px;top:50px">Polyline</div>
<div class="rl" style="left:56px;top:50px">Circle</div>
<div class="rl" style="left:84px;top:50px">Arc</div>
<div class="pl" style="left:52.5px;top:70px">Draw</div>
<div class="rl" style="left:137.8px;top:31px">Move</div>
<div class="rl" style="left:137.8px;top:44px">Copy</div>
<div class="rl" style="left:137.8px;top:56.7px">Stretch</div>
<div class="rl" style="left:176px;top:31px">Rotate</div>
<div class="rl" style="left:176px;top:44px">Mirror</div>
<div class="rl" style="left:176px;top:56.7px">Scale</div>
<div class="rl" style="left:213px;top:31px">Trim</div>
<div class="rl" style="left:213px;top:44px">Fillet</div>
<div class="rl" style="left:213px;top:56.7px">Array</div>
<div class="pl" style="left:176.5px;top:70px">Modify</div>
<div class="rl" style="left:263px;top:50px">Text</div>
<div class="rl" style="left:281.5px;top:50px">Dimension</div>
<div class="rl" style="left:327.7px;top:31px">Linear</div>
<div class="rl" style="left:327.7px;top:44px">Leader</div>
<div class="rl" style="left:327.7px;top:56.7px">Table</div>
<div class="pl" style="left:287px;top:70px">Annotation</div>
<div class="rl" style="left:366px;top:50px">Layer</div>
<div class="rl" style="left:360px;top:57.7px">Properties</div>


<!-- RIBBON RIGHT -->
<svg style="left:0;top:0" width="1024" height="80">
<!-- Insert icon (partially hidden) -->
<path d="M513 28.8h6l3.3 3.3v9.6h-9.3z" fill="#6cc8ec"/>
<rect x="505" y="34" width="9" height="7" fill="#9aa0a8"/>
<circle cx="515.7" cy="40" r="4.6" fill="none" stroke="#9aa0a8" stroke-width="1.6"/>
<!-- Create/Edit/Edit Attributes icons -->
<g fill="#b9bec6"><rect x="526" y="33" width="7" height="5"/><rect x="526" y="46" width="7" height="5"/></g>
<path d="M531 30l1 2 2 .3-1.5 1.4.4 2-1.9-1-1.9 1 .4-2-1.5-1.4 2-.3z" fill="#f0c040"/>
<path d="M530 47l4-4 1 1-4 4z" fill="#e0b040"/><path d="M533.5 42.5l1.2-1.2 1 1-1.2 1.2z" fill="#d04040"/>
<path d="M526 58l4 5 5-7" fill="none" stroke="#e8eaee" stroke-width="1.6"/><path d="M532 60l3-3 1 1-3 3z" fill="#e0b040"/>
<!-- Match properties -->
<rect x="597" y="29.5" width="11" height="15" fill="#e6e8ec"/><rect x="598.5" y="31" width="8" height="5" fill="#6cc0ea"/>
<rect x="598.5" y="38" width="8" height="1" fill="#9aa0a8"/><rect x="598.5" y="40.5" width="8" height="1" fill="#9aa0a8"/>
<path d="M605 44l6-6 2.5 2.5-6 6z" fill="#e0c050"/><path d="M610 37l2-2 3 3-2 2z" fill="#e8eaee"/>
<!-- color wheel -->
<circle cx="626.5" cy="34.6" r="4.7" fill="#d040a0"/>
<path d="M626.5 34.6L626.5 29.9A4.7 4.7 0 0 1 631.2 34.6z" fill="#f0c030"/>
<path d="M626.5 34.6L631.2 34.6A4.7 4.7 0 0 1 626.5 39.3z" fill="#e04050"/>
<path d="M626.5 34.6L626.5 39.3A4.7 4.7 0 0 1 621.8 34.6z" fill="#4080e0"/>
<path d="M626.5 34.6L621.8 34.6A4.7 4.7 0 0 1 626.5 29.9z" fill="#40c0a0"/>
<g fill="#e6e8ec"><rect x="622" y="42" width="9" height="1.2"/><rect x="622" y="44.6" width="9" height="1.2"/><rect x="622" y="47.3" width="9" height="1.6"/><rect x="622" y="50" width="9" height="1.8"/></g>
<g fill="#b8bcc4"><rect x="622" y="56" width="9" height="0.8" opacity=".8"/><rect x="622" y="59" width="9" height="0.9"/><rect x="622" y="62" width="9" height="1.2"/></g>
<!-- property combos -->
<g fill="#475062">
<rect x="633" y="29.8" width="94.5" height="9.7"/>
<rect x="633" y="41.4" width="94.5" height="10.3"/>
<rect x="633" y="53.7" width="94.5" height="10.8"/>
</g>
<rect x="639" y="30.5" width="9" height="8.5" fill="#95969a"/>
<path d="M634 46.5h34" stroke="#c8ccd2" stroke-width="0.8"/>
<path d="M634 59h34" stroke="#b0b4ba" stroke-width="0.6"/>
<g fill="#d8dce2"><path d="M723 34h3l-1.5 1.5z"/><path d="M723 46h3l-1.5 1.5z"/><path d="M723 58.5h3l-1.5 1.5z"/></g>
<!-- Group -->
<path d="M734.5 31v15h1.5M734.5 31h1.5M747 31v15h-1.5M747 31h-1.5" fill="none" stroke="#d8dce2" stroke-width="0.8"/>
<rect x="737" y="34" width="6" height="4" fill="#6cc0ea"/>
<circle cx="740" cy="42" r="2.3" fill="none" stroke="#b8bcc4" stroke-width="1"/>
<path d="M746 30l1.2 2.2 2.4.3-1.7 1.6.4 2.4-2.3-1.2-2.3 1.2.4-2.4-1.7-1.6 2.4-.3z" fill="#f2c040"/>
<!-- group small icons -->
<rect x="755" y="31" width="5" height="7" fill="#7a90b0"/><rect x="758" y="33" width="5" height="4" fill="#c04060"/>
<rect x="755" y="43" width="4" height="8" fill="#8aa0b8"/><path d="M758 50l4-4 1 1-4 4z" fill="#e0b040"/>
<rect x="752.5" y="54" width="12" height="12" fill="#3c6a8e"/><rect x="753" y="54.5" width="11" height="11" fill="none" stroke="#6cb0e0" stroke-width=".8"/>
<path d="M756 58l2 5 1-2 2 2" stroke="#e8eaee" stroke-width="1" fill="none"/><rect x="754.5" y="56" width="3" height="5" fill="#40a060"/>
<!-- Measure -->
<rect x="777.5" y="36.7" width="15.5" height="4" fill="#e8c04a"/>
<g fill="#9a7a30"><rect x="779" y="37" width=".6" height="1.5"/><rect x="781.5" y="37" width=".6" height="1.5"/><rect x="784" y="37" width=".6" height="1.5"/><rect x="786.5" y="37" width=".6" height="1.5"/><rect x="789" y="37" width=".6" height="1.5"/></g>
<!-- utility icons -->
<rect x="806" y="33" width="9" height="6" fill="#e6e8ec"/><rect x="805" y="31" width="4" height="3" fill="#6cc0ea"/><circle cx="811" cy="31" r="1.3" fill="#f0c040"/>
<rect x="805" y="43" width="9" height="8" fill="#2f8a50"/><path d="M808 45l2 5 1-2 2 2" stroke="#e8eaee" stroke-width="1" fill="none"/>
<rect x="806.5" y="55.5" width="7" height="9.5" fill="none" stroke="#d8dce2" stroke-width="1"/><rect x="808" y="57" width="4" height="2" fill="#d8dce2"/>
<!-- Paste -->
<rect x="825" y="32" width="11" height="13" fill="#d8b060"/><rect x="828" y="30" width="5" height="3" fill="#e8eaee"/>
<path d="M830 36h7l3 3v8h-10z" fill="#e8eaee"/>
<rect x="849" y="31" width="7" height="8" fill="none" stroke="#d8dce2" stroke-width="1"/><path d="M853 35l4 4M857 35l-4 4" stroke="#d8dce2" stroke-width="1"/>
<rect x="849" y="43" width="6" height="7" fill="#b8bcc4"/><rect x="851" y="45" width="6" height="7" fill="#d8dce2"/>
<!-- Base -->
<path d="M869 34.5h6v4.5h11v8.7h-17z" fill="#e6e8ec"/>
<!-- view label launcher -->
</svg>
<div class="rl" style="left:510.6px;top:50px">sert</div>
<div class="rl" style="left:537.6px;top:31px">Create</div>
<div class="rl" style="left:537.6px;top:44px">Edit</div>
<div class="rl" style="left:537.6px;top:56.7px">Edit Attributes</div>
<div class="pl" style="left:533.5px;top:70px">Block</div>
<div class="rl" style="left:596.4px;top:50px">Match</div>
<div class="rl" style="left:591px;top:57.7px">Properties</div>
<div class="rl" style="left:653.5px;top:31.6px;font-size:5.8px">147,149,152</div>
<div class="rl" style="left:669px;top:42.7px;font-size:6px">ByLayer</div>
<div class="rl" style="left:669px;top:55.3px;font-size:6px">ByLayer</div>
<div class="pl" style="left:637.8px;top:70px">Properties</div>
<div class="rl" style="left:732.4px;top:50px">Group</div>
<div class="pl" style="left:733.5px;top:70px">Groups</div>
<div class="rl" style="left:772.8px;top:49.7px">Measure</div>
<div class="pl" style="left:777.5px;top:70px">Utilities</div>
<div class="rl" style="left:825px;top:50px">Paste</div>
<div class="pl" style="left:825.6px;top:70px">Clipboard</div>
<div class="rl" style="left:870.5px;top:52.4px">Base</div>
<div class="pl" style="left:863.4px;top:70px">View</div>

<!-- LAYER DROPDOWN -->
<div class="a" style="left:388.5px;top:40px;width:122px;height:386.5px;background:#2a2f39"></div>
<div class="a" style="left:390px;top:40.5px;width:120px;height:385px;background:#4e5a70"></div>
<div class="a" style="left:505.6px;top:40.6px;width:4.2px;height:267.2px;background:#2c313c"></div>
<div class="a" style="left:392.5px;top:323.9px;width:111.5px;height:12px;background:#3c4352"></div>
<div class="a" style="left:390.5px;top:29.8px;width:110px;height:10.4px;background:#475066"></div>
<svg style="left:0;top:0" width="520" height="440">
<circle cx="398" cy="46.50" r="2.6" fill="#7cd0f0"/><rect x="396.80" y="48.90" width="2.4" height="2" fill="#f4f4f4"/>
<circle cx="407.6" cy="47.90" r="2.3" fill="#f2d27a"/><path d="M407.6 44.30v1.2M407.6 50.30v1.2M404.00 47.90h1.2M410.00 47.90h1.2M405.10 45.40l.8.8M409.30 49.60l.8.8M410.10 45.40l-.8.8M405.90 49.60l-.8.8" stroke="#f2d27a" stroke-width="0.7"/>
<rect x="414" y="46.70" width="6.2" height="4.6" fill="#f2d27a"/><path d="M418.40 46.70v-1.6a1.8 1.8 0 0 1 3.6 0v0.6" fill="none" stroke="#f2d27a" stroke-width="0.9"/><rect x="416.60" y="48.10" width="1" height="1.6" fill="#8a6a30"/>
<rect x="424.9" y="44.30" width="7.6" height="7.4" fill="#20242c"/><rect x="425.70" y="45.10" width="6" height="5.8" fill="#ffffff"/>
<circle cx="398" cy="59.33" r="2.6" fill="#7cd0f0"/><rect x="396.80" y="61.73" width="2.4" height="2" fill="#f4f4f4"/>
<circle cx="407.6" cy="60.73" r="2.3" fill="#f2d27a"/><path d="M407.6 57.13v1.2M407.6 63.13v1.2M404.00 60.73h1.2M410.00 60.73h1.2M405.10 58.23l.8.8M409.30 62.43l.8.8M410.10 58.23l-.8.8M405.90 62.43l-.8.8" stroke="#f2d27a" stroke-width="0.7"/>
<rect x="414" y="59.53" width="6.2" height="4.6" fill="#f2d27a"/><path d="M418.40 59.53v-1.6a1.8 1.8 0 0 1 3.6 0v0.6" fill="none" stroke="#f2d27a" stroke-width="0.9"/><rect x="416.60" y="60.93" width="1" height="1.6" fill="#8a6a30"/>
<rect x="424.9" y="57.13" width="7.6" height="7.4" fill="#20242c"/><rect x="425.70" y="57.93" width="6" height="5.8" fill="#9a9da3"/>
<circle cx="398" cy="72.16" r="2.6" fill="#7cd0f0"/><rect x="396.80" y="74.56" width="2.4" height="2" fill="#f4f4f4"/>
<circle cx="407.6" cy="73.56" r="2.3" fill="#f2d27a"/><path d="M407.6 69.96v1.2M407.6 75.96v1.2M404.00 73.56h1.2M410.00 73.56h1.2M405.10 71.06l.8.8M409.30 75.26l.8.8M410.10 71.06l-.8.8M405.90 75.26l-.8.8" stroke="#f2d27a" stroke-width="0.7"/>
<rect x="414" y="72.36" width="6.2" height="4.6" fill="#f2d27a"/><path d="M418.40 72.36v-1.6a1.8 1.8 0 0 1 3.6 0v0.6" fill="none" stroke="#f2d27a" stroke-width="0.9"/><rect x="416.60" y="73.76" width="1" height="1.6" fill="#8a6a30"/>
<rect x="424.9" y="69.96" width="7.6" height="7.4" fill="#20242c"/><rect x="425.70" y="70.76" width="6" height="5.8" fill="#ffffff"/>
<circle cx="398" cy="84.99" r="2.6" fill="#7cd0f0"/><rect x="396.80" y="87.39" width="2.4" height="2" fill="#f4f4f4"/>
<circle cx="407.6" cy="86.39" r="2.3" fill="#f2d27a"/><path d="M407.6 82.79v1.2M407.6 88.79v1.2M404.00 86.39h1.2M410.00 86.39h1.2M405.10 83.89l.8.8M409.30 88.09l.8.8M410.10 83.89l-.8.8M405.90 88.09l-.8.8" stroke="#f2d27a" stroke-width="0.7"/>
<rect x="414" y="85.19" width="6.2" height="4.6" fill="#f2d27a"/><path d="M418.40 85.19v-1.6a1.8 1.8 0 0 1 3.6 0v0.6" fill="none" stroke="#f2d27a" stroke-width="0.9"/><rect x="416.60" y="86.59" width="1" height="1.6" fill="#8a6a30"/>
<rect x="424.9" y="82.79" width="7.6" height="7.4" fill="#20242c"/><rect x="425.70" y="83.59" width="6" height="5.8" fill="#9a9da3"/>
<circle cx="398" cy="97.82" r="2.6" fill="#f2d27a"/><rect x="396.80" y="100.22" width="2.4" height="2" fill="#f4f4f4"/>
<circle cx="407.6" cy="99.22" r="2.3" fill="#f2d27a"/><path d="M407.6 95.62v1.2M407.6 101.62v1.2M404.00 99.22h1.2M410.00 99.22h1.2M405.10 96.72l.8.8M409.30 100.92l.8.8M410.10 96.72l-.8.8M405.90 100.92l-.8.8" stroke="#f2d27a" stroke-width="0.7"/>
<rect x="414" y="98.02" width="6.2" height="4.6" fill="#f2d27a"/><path d="M418.40 98.02v-1.6a1.8 1.8 0 0 1 3.6 0v0.6" fill="none" stroke="#f2d27a" stroke-width="0.9"/><rect x="416.60" y="99.42" width="1" height="1.6" fill="#8a6a30"/>
<rect x="424.9" y="95.62" width="7.6" height="7.4" fill="#20242c"/><rect x="425.70" y="96.42" width="6" height="5.8" fill="#1c3aa0"/><path d="M426.40 97.72h.8M428.90 97.22h.8M427.40 99.72h.8M429.90 100.22h.8M426.40 101.22h.8" stroke="#b0c0ff" stroke-width="0.8" opacity="0.8"/>
<circle cx="398" cy="110.65" r="2.6" fill="#7cd0f0"/><rect x="396.80" y="113.05" width="2.4" height="2" fill="#f4f4f4"/>
<circle cx="407.6" cy="112.05" r="2.3" fill="#f2d27a"/><path d="M407.6 108.45v1.2M407.6 114.45v1.2M404.00 112.05h1.2M410.00 112.05h1.2M405.10 109.55l.8.8M409.30 113.75l.8.8M410.10 109.55l-.8.8M405.90 113.75l-.8.8" stroke="#f2d27a" stroke-width="0.7"/>
<rect x="414" y="110.85" width="6.2" height="4.6" fill="#f2d27a"/><path d="M418.40 110.85v-1.6a1.8 1.8 0 0 1 3.6 0v0.6" fill="none" stroke="#f2d27a" stroke-width="0.9"/><rect x="416.60" y="112.25" width="1" height="1.6" fill="#8a6a30"/>
<rect x="424.9" y="108.45" width="7.6" height="7.4" fill="#20242c"/><rect x="425.70" y="109.25" width="6" height="5.8" fill="#929292"/>
<circle cx="398" cy="123.48" r="2.6" fill="#f2d27a"/><rect x="396.80" y="125.88" width="2.4" height="2" fill="#f4f4f4"/>
<circle cx="407.6" cy="124.88" r="2.3" fill="#f2d27a"/><path d="M407.6 121.28v1.2M407.6 127.28v1.2M404.00 124.88h1.2M410.00 124.88h1.2M405.10 122.38l.8.8M409.30 126.58l.8.8M410.10 122.38l-.8.8M405.90 126.58l-.8.8" stroke="#f2d27a" stroke-width="0.7"/>
<rect x="414" y="123.68" width="6.2" height="4.6" fill="#f2d27a"/><path d="M418.40 123.68v-1.6a1.8 1.8 0 0 1 3.6 0v0.6" fill="none" stroke="#f2d27a" stroke-width="0.9"/><rect x="416.60" y="125.08" width="1" height="1.6" fill="#8a6a30"/>
<rect x="424.9" y="121.28" width="7.6" height="7.4" fill="#20242c"/><rect x="425.70" y="122.08" width="6" height="5.8" fill="#0000ee"/>
<circle cx="398" cy="136.31" r="2.6" fill="#f2d27a"/><rect x="396.80" y="138.71" width="2.4" height="2" fill="#f4f4f4"/>
<circle cx="407.6" cy="137.71" r="2.3" fill="#f2d27a"/><path d="M407.6 134.11v1.2M407.6 140.11v1.2M404.00 137.71h1.2M410.00 137.71h1.2M405.10 135.21l.8.8M409.30 139.41l.8.8M410.10 135.21l-.8.8M405.90 139.41l-.8.8" stroke="#f2d27a" stroke-width="0.7"/>
<rect x="414" y="136.51" width="6.2" height="4.6" fill="#f2d27a"/><path d="M418.40 136.51v-1.6a1.8 1.8 0 0 1 3.6 0v0.6" fill="none" stroke="#f2d27a" stroke-width="0.9"/><rect x="416.60" y="137.91" width="1" height="1.6" fill="#8a6a30"/>
<rect x="424.9" y="134.11" width="7.6" height="7.4" fill="#20242c"/><rect x="425.70" y="134.91" width="6" height="5.8" fill="#ffffff"/>
<circle cx="398" cy="149.14" r="2.6" fill="#f2d27a"/><rect x="396.80" y="151.54" width="2.4" height="2" fill="#f4f4f4"/>
<circle cx="407.6" cy="150.54" r="2.3" fill="#f2d27a"/><path d="M407.6 146.94v1.2M407.6 152.94v1.2M404.00 150.54h1.2M410.00 150.54h1.2M405.10 148.04l.8.8M409.30 152.24l.8.8M410.10 148.04l-.8.8M405.90 152.24l-.8.8" stroke="#f2d27a" stroke-width="0.7"/>
<rect x="414" y="149.34" width="6.2" height="4.6" fill="#f2d27a"/><path d="M418.40 149.34v-1.6a1.8 1.8 0 0 1 3.6 0v0.6" fill="none" stroke="#f2d27a" stroke-width="0.9"/><rect x="416.60" y="150.74" width="1" height="1.6" fill="#8a6a30"/>
<rect x="424.9" y="146.94" width="7.6" height="7.4" fill="#20242c"/><rect x="425.70" y="147.74" width="6" height="5.8" fill="#ff00ff"/>
<circle cx="398" cy="161.97" r="2.6" fill="#f2d27a"/><rect x="396.80" y="164.37" width="2.4" height="2" fill="#f4f4f4"/>
<circle cx="407.6" cy="163.37" r="2.3" fill="#f2d27a"/><path d="M407.6 159.77v1.2M407.6 165.77v1.2M404.00 163.37h1.2M410.00 163.37h1.2M405.10 160.87l.8.8M409.30 165.07l.8.8M410.10 160.87l-.8.8M405.90 165.07l-.8.8" stroke="#f2d27a" stroke-width="0.7"/>
<rect x="414" y="162.17" width="6.2" height="4.6" fill="#f2d27a"/><path d="M418.40 162.17v-1.6a1.8 1.8 0 0 1 3.6 0v0.6" fill="none" stroke="#f2d27a" stroke-width="0.9"/><rect x="416.60" y="163.57" width="1" height="1.6" fill="#8a6a30"/>
<rect x="424.9" y="159.77" width="7.6" height="7.4" fill="#20242c"/><rect x="425.70" y="160.57" width="6" height="5.8" fill="#ff00ff"/>
<circle cx="398" cy="174.80" r="2.6" fill="#f2d27a"/><rect x="396.80" y="177.20" width="2.4" height="2" fill="#f4f4f4"/>
<circle cx="407.6" cy="176.20" r="2.3" fill="#f2d27a"/><path d="M407.6 172.60v1.2M407.6 178.60v1.2M404.00 176.20h1.2M410.00 176.20h1.2M405.10 173.70l.8.8M409.30 177.90l.8.8M410.10 173.70l-.8.8M405.90 177.90l-.8.8" stroke="#f2d27a" stroke-width="0.7"/>
<rect x="414" y="175.00" width="6.2" height="4.6" fill="#f2d27a"/><path d="M418.40 175.00v-1.6a1.8 1.8 0 0 1 3.6 0v0.6" fill="none" stroke="#f2d27a" stroke-width="0.9"/><rect x="416.60" y="176.40" width="1" height="1.6" fill="#8a6a30"/>
<rect x="424.9" y="172.60" width="7.6" height="7.4" fill="#20242c"/><rect x="425.70" y="173.40" width="6" height="5.8" fill="#ffffff"/>
<circle cx="398" cy="187.63" r="2.6" fill="#f2d27a"/><rect x="396.80" y="190.03" width="2.4" height="2" fill="#f4f4f4"/>
<circle cx="407.6" cy="189.03" r="2.3" fill="#f2d27a"/><path d="M407.6 185.43v1.2M407.6 191.43v1.2M404.00 189.03h1.2M410.00 189.03h1.2M405.10 186.53l.8.8M409.30 190.73l.8.8M410.10 186.53l-.8.8M405.90 190.73l-.8.8" stroke="#f2d27a" stroke-width="0.7"/>
<rect x="414" y="187.83" width="6.2" height="4.6" fill="#f2d27a"/><path d="M418.40 187.83v-1.6a1.8 1.8 0 0 1 3.6 0v0.6" fill="none" stroke="#f2d27a" stroke-width="0.9"/><rect x="416.60" y="189.23" width="1" height="1.6" fill="#8a6a30"/>
<rect x="424.9" y="185.43" width="7.6" height="7.4" fill="#20242c"/><rect x="425.70" y="186.23" width="6" height="5.8" fill="#d0106a"/><path d="M426.40 187.53h.8M428.90 187.03h.8M427.40 189.53h.8M429.90 190.03h.8M426.40 191.03h.8" stroke="#b0c0ff" stroke-width="0.8" opacity="0.8"/>
<circle cx="398" cy="200.46" r="2.6" fill="#f2d27a"/><rect x="396.80" y="202.86" width="2.4" height="2" fill="#f4f4f4"/>
<circle cx="407.6" cy="201.86" r="2.3" fill="#f2d27a"/><path d="M407.6 198.26v1.2M407.6 204.26v1.2M404.00 201.86h1.2M410.00 201.86h1.2M405.10 199.36l.8.8M409.30 203.56l.8.8M410.10 199.36l-.8.8M405.90 203.56l-.8.8" stroke="#f2d27a" stroke-width="0.7"/>
<rect x="414" y="200.66" width="6.2" height="4.6" fill="#f2d27a"/><path d="M418.40 200.66v-1.6a1.8 1.8 0 0 1 3.6 0v0.6" fill="none" stroke="#f2d27a" stroke-width="0.9"/><rect x="416.60" y="202.06" width="1" height="1.6" fill="#8a6a30"/>
<rect x="424.9" y="198.26" width="7.6" height="7.4" fill="#20242c"/><rect x="425.70" y="199.06" width="6" height="5.8" fill="#aaa020"/>
<circle cx="398" cy="213.29" r="2.6" fill="#f2d27a"/><rect x="396.80" y="215.69" width="2.4" height="2" fill="#f4f4f4"/>
<circle cx="407.6" cy="214.69" r="2.3" fill="#f2d27a"/><path d="M407.6 211.09v1.2M407.6 217.09v1.2M404.00 214.69h1.2M410.00 214.69h1.2M405.10 212.19l.8.8M409.30 216.39l.8.8M410.10 212.19l-.8.8M405.90 216.39l-.8.8" stroke="#f2d27a" stroke-width="0.7"/>
<rect x="414" y="213.49" width="6.2" height="4.6" fill="#f2d27a"/><path d="M418.40 213.49v-1.6a1.8 1.8 0 0 1 3.6 0v0.6" fill="none" stroke="#f2d27a" stroke-width="0.9"/><rect x="416.60" y="214.89" width="1" height="1.6" fill="#8a6a30"/>
<rect x="424.9" y="211.09" width="7.6" height="7.4" fill="#20242c"/><rect x="425.70" y="211.89" width="6" height="5.8" fill="#2a7a50"/><path d="M426.40 213.19h.8M428.90 212.69h.8M427.40 215.19h.8M429.90 215.69h.8M426.40 216.69h.8" stroke="#b0c0ff" stroke-width="0.8" opacity="0.8"/>
<circle cx="398" cy="226.12" r="2.6" fill="#f2d27a"/><rect x="396.80" y="228.52" width="2.4" height="2" fill="#f4f4f4"/>
<circle cx="407.6" cy="227.52" r="2.3" fill="#f2d27a"/><path d="M407.6 223.92v1.2M407.6 229.92v1.2M404.00 227.52h1.2M410.00 227.52h1.2M405.10 225.02l.8.8M409.30 229.22l.8.8M410.10 225.02l-.8.8M405.90 229.22l-.8.8" stroke="#f2d27a" stroke-width="0.7"/>
<rect x="414" y="226.32" width="6.2" height="4.6" fill="#f2d27a"/><path d="M418.40 226.32v-1.6a1.8 1.8 0 0 1 3.6 0v0.6" fill="none" stroke="#f2d27a" stroke-width="0.9"/><rect x="416.60" y="227.72" width="1" height="1.6" fill="#8a6a30"/>
<rect x="424.9" y="223.92" width="7.6" height="7.4" fill="#20242c"/><rect x="425.70" y="224.72" width="6" height="5.8" fill="#ffff00"/>
<circle cx="398" cy="238.95" r="2.6" fill="#f2d27a"/><rect x="396.80" y="241.35" width="2.4" height="2" fill="#f4f4f4"/>
<circle cx="407.6" cy="240.35" r="2.3" fill="#f2d27a"/><path d="M407.6 236.75v1.2M407.6 242.75v1.2M404.00 240.35h1.2M410.00 240.35h1.2M405.10 237.85l.8.8M409.30 242.05l.8.8M410.10 237.85l-.8.8M405.90 242.05l-.8.8" stroke="#f2d27a" stroke-width="0.7"/>
<rect x="414" y="239.15" width="6.2" height="4.6" fill="#f2d27a"/><path d="M418.40 239.15v-1.6a1.8 1.8 0 0 1 3.6 0v0.6" fill="none" stroke="#f2d27a" stroke-width="0.9"/><rect x="416.60" y="240.55" width="1" height="1.6" fill="#8a6a30"/>
<rect x="424.9" y="236.75" width="7.6" height="7.4" fill="#20242c"/><rect x="425.70" y="237.55" width="6" height="5.8" fill="#6e6e6e"/>
<circle cx="398" cy="251.78" r="2.6" fill="#f2d27a"/><rect x="396.80" y="254.18" width="2.4" height="2" fill="#f4f4f4"/>
<circle cx="407.6" cy="253.18" r="2.3" fill="#f2d27a"/><path d="M407.6 249.58v1.2M407.6 255.58v1.2M404.00 253.18h1.2M410.00 253.18h1.2M405.10 250.68l.8.8M409.30 254.88l.8.8M410.10 250.68l-.8.8M405.90 254.88l-.8.8" stroke="#f2d27a" stroke-width="0.7"/>
<rect x="414" y="251.98" width="6.2" height="4.6" fill="#f2d27a"/><path d="M418.40 251.98v-1.6a1.8 1.8 0 0 1 3.6 0v0.6" fill="none" stroke="#f2d27a" stroke-width="0.9"/><rect x="416.60" y="253.38" width="1" height="1.6" fill="#8a6a30"/>
<rect x="424.9" y="249.58" width="7.6" height="7.4" fill="#20242c"/><rect x="425.70" y="250.38" width="6" height="5.8" fill="#6e6e6e"/>
<circle cx="398" cy="264.61" r="2.6" fill="#f2d27a"/><rect x="396.80" y="267.01" width="2.4" height="2" fill="#f4f4f4"/>
<circle cx="407.6" cy="266.01" r="2.3" fill="#f2d27a"/><path d="M407.6 262.41v1.2M407.6 268.41v1.2M404.00 266.01h1.2M410.00 266.01h1.2M405.10 263.51l.8.8M409.30 267.71l.8.8M410.10 263.51l-.8.8M405.90 267.71l-.8.8" stroke="#f2d27a" stroke-width="0.7"/>
<rect x="414" y="264.81" width="6.2" height="4.6" fill="#f2d27a"/><path d="M418.40 264.81v-1.6a1.8 1.8 0 0 1 3.6 0v0.6" fill="none" stroke="#f2d27a" stroke-width="0.9"/><rect x="416.60" y="266.21" width="1" height="1.6" fill="#8a6a30"/>
<rect x="424.9" y="262.41" width="7.6" height="7.4" fill="#20242c"/><rect x="425.70" y="263.21" width="6" height="5.8" fill="#ff00ff"/>
<circle cx="398" cy="277.44" r="2.6" fill="#f2d27a"/><rect x="396.80" y="279.84" width="2.4" height="2" fill="#f4f4f4"/>
<circle cx="407.6" cy="278.84" r="2.3" fill="#f2d27a"/><path d="M407.6 275.24v1.2M407.6 281.24v1.2M404.00 278.84h1.2M410.00 278.84h1.2M405.10 276.34l.8.8M409.30 280.54l.8.8M410.10 276.34l-.8.8M405.90 280.54l-.8.8" stroke="#f2d27a" stroke-width="0.7"/>
<rect x="414" y="277.64" width="6.2" height="4.6" fill="#f2d27a"/><path d="M418.40 277.64v-1.6a1.8 1.8 0 0 1 3.6 0v0.6" fill="none" stroke="#f2d27a" stroke-width="0.9"/><rect x="416.60" y="279.04" width="1" height="1.6" fill="#8a6a30"/>
<rect x="424.9" y="275.24" width="7.6" height="7.4" fill="#20242c"/><rect x="425.70" y="276.04" width="6" height="5.8" fill="#ffffff"/>
<circle cx="398" cy="290.27" r="2.6" fill="#f2d27a"/><rect x="396.80" y="292.67" width="2.4" height="2" fill="#f4f4f4"/>
<circle cx="407.6" cy="291.67" r="2.3" fill="#f2d27a"/><path d="M407.6 288.07v1.2M407.6 294.07v1.2M404.00 291.67h1.2M410.00 291.67h1.2M405.10 289.17l.8.8M409.30 293.37l.8.8M410.10 289.17l-.8.8M405.90 293.37l-.8.8" stroke="#f2d27a" stroke-width="0.7"/>
<rect x="414" y="290.47" width="6.2" height="4.6" fill="#f2d27a"/><path d="M418.40 290.47v-1.6a1.8 1.8 0 0 1 3.6 0v0.6" fill="none" stroke="#f2d27a" stroke-width="0.9"/><rect x="416.60" y="291.87" width="1" height="1.6" fill="#8a6a30"/>
<rect x="424.9" y="288.07" width="7.6" height="7.4" fill="#20242c"/><rect x="425.70" y="288.87" width="6" height="5.8" fill="#ffffff"/>
<circle cx="398" cy="303.10" r="2.6" fill="#f2d27a"/><rect x="396.80" y="305.50" width="2.4" height="2" fill="#f4f4f4"/>
<circle cx="407.6" cy="304.50" r="2.3" fill="#f2d27a"/><path d="M407.6 300.90v1.2M407.6 306.90v1.2M404.00 304.50h1.2M410.00 304.50h1.2M405.10 302.00l.8.8M409.30 306.20l.8.8M410.10 302.00l-.8.8M405.90 306.20l-.8.8" stroke="#f2d27a" stroke-width="0.7"/>
<rect x="414" y="303.30" width="6.2" height="4.6" fill="#7cc8ec"/><path d="M415.20 303.30v-1.5a1.9 1.9 0 0 1 3.8 0v1.5" fill="none" stroke="#7cc8ec" stroke-width="0.9"/><rect x="416.60" y="304.70" width="1" height="1.6" fill="#8a6a30"/>
<rect x="424.9" y="300.90" width="7.6" height="7.4" fill="#20242c"/><rect x="425.70" y="301.70" width="6" height="5.8" fill="#ffffff"/>
<circle cx="398" cy="315.93" r="2.6" fill="#f2d27a"/><rect x="396.80" y="318.33" width="2.4" height="2" fill="#f4f4f4"/>
<circle cx="407.6" cy="317.33" r="2.3" fill="#f2d27a"/><path d="M407.6 313.73v1.2M407.6 319.73v1.2M404.00 317.33h1.2M410.00 317.33h1.2M405.10 314.83l.8.8M409.30 319.03l.8.8M410.10 314.83l-.8.8M405.90 319.03l-.8.8" stroke="#f2d27a" stroke-width="0.7"/>
<rect x="414" y="316.13" width="6.2" height="4.6" fill="#f2d27a"/><path d="M418.40 316.13v-1.6a1.8 1.8 0 0 1 3.6 0v0.6" fill="none" stroke="#f2d27a" stroke-width="0.9"/><rect x="416.60" y="317.53" width="1" height="1.6" fill="#8a6a30"/>
<rect x="424.9" y="313.73" width="7.6" height="7.4" fill="#20242c"/><rect x="425.70" y="314.53" width="6" height="5.8" fill="#c4c4c4"/>
<circle cx="398" cy="328.76" r="2.6" fill="#f2d27a"/><rect x="396.80" y="331.16" width="2.4" height="2" fill="#f4f4f4"/>
<circle cx="407.6" cy="330.16" r="2.3" fill="#f2d27a"/><path d="M407.6 326.56v1.2M407.6 332.56v1.2M404.00 330.16h1.2M410.00 330.16h1.2M405.10 327.66l.8.8M409.30 331.86l.8.8M410.10 327.66l-.8.8M405.90 331.86l-.8.8" stroke="#f2d27a" stroke-width="0.7"/>
<rect x="414" y="328.96" width="6.2" height="4.6" fill="#f2d27a"/><path d="M418.40 328.96v-1.6a1.8 1.8 0 0 1 3.6 0v0.6" fill="none" stroke="#f2d27a" stroke-width="0.9"/><rect x="416.60" y="330.36" width="1" height="1.6" fill="#8a6a30"/>
<rect x="424.9" y="326.56" width="7.6" height="7.4" fill="#20242c"/><rect x="425.70" y="327.36" width="6" height="5.8" fill="#c4c4c4"/>
<circle cx="398" cy="341.59" r="2.6" fill="#f2d27a"/><rect x="396.80" y="343.99" width="2.4" height="2" fill="#f4f4f4"/>
<circle cx="407.6" cy="342.99" r="2.3" fill="#f2d27a"/><path d="M407.6 339.39v1.2M407.6 345.39v1.2M404.00 342.99h1.2M410.00 342.99h1.2M405.10 340.49l.8.8M409.30 344.69l.8.8M410.10 340.49l-.8.8M405.90 344.69l-.8.8" stroke="#f2d27a" stroke-width="0.7"/>
<rect x="414" y="341.79" width="6.2" height="4.6" fill="#f2d27a"/><path d="M418.40 341.79v-1.6a1.8 1.8 0 0 1 3.6 0v0.6" fill="none" stroke="#f2d27a" stroke-width="0.9"/><rect x="416.60" y="343.19" width="1" height="1.6" fill="#8a6a30"/>
<rect x="424.9" y="339.39" width="7.6" height="7.4" fill="#20242c"/><rect x="425.70" y="340.19" width="6" height="5.8" fill="#ffff00"/>
<circle cx="398" cy="354.42" r="2.6" fill="#f2d27a"/><rect x="396.80" y="356.82" width="2.4" height="2" fill="#f4f4f4"/>
<circle cx="407.6" cy="355.82" r="2.3" fill="#f2d27a"/><path d="M407.6 352.22v1.2M407.6 358.22v1.2M404.00 355.82h1.2M410.00 355.82h1.2M405.10 353.32l.8.8M409.30 357.52l.8.8M410.10 353.32l-.8.8M405.90 357.52l-.8.8" stroke="#f2d27a" stroke-width="0.7"/>
<rect x="414" y="354.62" width="6.2" height="4.6" fill="#f2d27a"/><path d="M418.40 354.62v-1.6a1.8 1.8 0 0 1 3.6 0v0.6" fill="none" stroke="#f2d27a" stroke-width="0.9"/><rect x="416.60" y="356.02" width="1" height="1.6" fill="#8a6a30"/>
<rect x="424.9" y="352.22" width="7.6" height="7.4" fill="#20242c"/><rect x="425.70" y="353.02" width="6" height="5.8" fill="#929292"/>
<circle cx="398" cy="367.25" r="2.6" fill="#f2d27a"/><rect x="396.80" y="369.65" width="2.4" height="2" fill="#f4f4f4"/>
<circle cx="407.6" cy="368.65" r="2.3" fill="#f2d27a"/><path d="M407.6 365.05v1.2M407.6 371.05v1.2M404.00 368.65h1.2M410.00 368.65h1.2M405.10 366.15l.8.8M409.30 370.35l.8.8M410.10 366.15l-.8.8M405.90 370.35l-.8.8" stroke="#f2d27a" stroke-width="0.7"/>
<rect x="414" y="367.45" width="6.2" height="4.6" fill="#f2d27a"/><path d="M418.40 367.45v-1.6a1.8 1.8 0 0 1 3.6 0v0.6" fill="none" stroke="#f2d27a" stroke-width="0.9"/><rect x="416.60" y="368.85" width="1" height="1.6" fill="#8a6a30"/>
<rect x="424.9" y="365.05" width="7.6" height="7.4" fill="#20242c"/><rect x="425.70" y="365.85" width="6" height="5.8" fill="#ffffff"/>
<circle cx="398" cy="380.08" r="2.6" fill="#f2d27a"/><rect x="396.80" y="382.48" width="2.4" height="2" fill="#f4f4f4"/>
<circle cx="407.6" cy="381.48" r="2.3" fill="#f2d27a"/><path d="M407.6 377.88v1.2M407.6 383.88v1.2M404.00 381.48h1.2M410.00 381.48h1.2M405.10 378.98l.8.8M409.30 383.18l.8.8M410.10 378.98l-.8.8M405.90 383.18l-.8.8" stroke="#f2d27a" stroke-width="0.7"/>
<rect x="414" y="380.28" width="6.2" height="4.6" fill="#f2d27a"/><path d="M418.40 380.28v-1.6a1.8 1.8 0 0 1 3.6 0v0.6" fill="none" stroke="#f2d27a" stroke-width="0.9"/><rect x="416.60" y="381.68" width="1" height="1.6" fill="#8a6a30"/>
<rect x="424.9" y="377.88" width="7.6" height="7.4" fill="#20242c"/><rect x="425.70" y="378.68" width="6" height="5.8" fill="#ffffff"/>
<circle cx="398" cy="392.91" r="2.6" fill="#f2d27a"/><rect x="396.80" y="395.31" width="2.4" height="2" fill="#f4f4f4"/>
<circle cx="407.6" cy="394.31" r="2.3" fill="#f2d27a"/><path d="M407.6 390.71v1.2M407.6 396.71v1.2M404.00 394.31h1.2M410.00 394.31h1.2M405.10 391.81l.8.8M409.30 396.01l.8.8M410.10 391.81l-.8.8M405.90 396.01l-.8.8" stroke="#f2d27a" stroke-width="0.7"/>
<rect x="414" y="393.11" width="6.2" height="4.6" fill="#f2d27a"/><path d="M418.40 393.11v-1.6a1.8 1.8 0 0 1 3.6 0v0.6" fill="none" stroke="#f2d27a" stroke-width="0.9"/><rect x="416.60" y="394.51" width="1" height="1.6" fill="#8a6a30"/>
<rect x="424.9" y="390.71" width="7.6" height="7.4" fill="#20242c"/><rect x="425.70" y="391.51" width="6" height="5.8" fill="#929292"/>
<circle cx="398" cy="405.74" r="2.6" fill="#f2d27a"/><rect x="396.80" y="408.14" width="2.4" height="2" fill="#f4f4f4"/>
<circle cx="407.6" cy="407.14" r="2.3" fill="#f2d27a"/><path d="M407.6 403.54v1.2M407.6 409.54v1.2M404.00 407.14h1.2M410.00 407.14h1.2M405.10 404.64l.8.8M409.30 408.84l.8.8M410.10 404.64l-.8.8M405.90 408.84l-.8.8" stroke="#f2d27a" stroke-width="0.7"/>
<rect x="414" y="405.94" width="6.2" height="4.6" fill="#f2d27a"/><path d="M418.40 405.94v-1.6a1.8 1.8 0 0 1 3.6 0v0.6" fill="none" stroke="#f2d27a" stroke-width="0.9"/><rect x="416.60" y="407.34" width="1" height="1.6" fill="#8a6a30"/>
<rect x="424.9" y="403.54" width="7.6" height="7.4" fill="#20242c"/><rect x="425.70" y="404.34" width="6" height="5.8" fill="#e0103c"/>
<circle cx="398" cy="418.57" r="2.6" fill="#f2d27a"/><rect x="396.80" y="420.97" width="2.4" height="2" fill="#f4f4f4"/>
<circle cx="407.6" cy="419.97" r="2.3" fill="#f2d27a"/><path d="M407.6 416.37v1.2M407.6 422.37v1.2M404.00 419.97h1.2M410.00 419.97h1.2M405.10 417.47l.8.8M409.30 421.67l.8.8M410.10 417.47l-.8.8M405.90 421.67l-.8.8" stroke="#f2d27a" stroke-width="0.7"/>
<rect x="414" y="418.77" width="6.2" height="4.6" fill="#f2d27a"/><path d="M418.40 418.77v-1.6a1.8 1.8 0 0 1 3.6 0v0.6" fill="none" stroke="#f2d27a" stroke-width="0.9"/><rect x="416.60" y="420.17" width="1" height="1.6" fill="#8a6a30"/>
<rect x="424.9" y="416.37" width="7.6" height="7.4" fill="#20242c"/><rect x="425.70" y="417.17" width="6" height="5.8" fill="#1c3aa0"/><path d="M426.40 418.47h.8M428.90 417.97h.8M427.40 420.47h.8M429.90 420.97h.8M426.40 421.97h.8" stroke="#b0c0ff" stroke-width="0.8" opacity="0.8"/>
<circle cx="397" cy="33.60" r="2.6" fill="#f2d27a"/><rect x="395.80" y="36.00" width="2.4" height="2" fill="#f4f4f4"/>
<circle cx="406" cy="35.00" r="2.3" fill="#f2d27a"/><path d="M406 31.40v1.2M406 37.40v1.2M402.40 35.00h1.2M408.40 35.00h1.2M403.50 32.50l.8.8M407.70 36.70l.8.8M408.50 32.50l-.8.8M404.30 36.70l-.8.8" stroke="#f2d27a" stroke-width="0.7"/>
<rect x="413" y="33.80" width="6.2" height="4.6" fill="#f2d27a"/><path d="M417.40 33.80v-1.6a1.8 1.8 0 0 1 3.6 0v0.6" fill="none" stroke="#f2d27a" stroke-width="0.9"/><rect x="415.60" y="35.20" width="1" height="1.6" fill="#8a6a30"/>
<rect x="423.5" y="31" width="8" height="8" fill="#20242c"/><rect x="424.3" y="31.8" width="6.4" height="6.4" fill="#10e010"/>
<path d="M496 34.3h3l-1.5 1.5z" fill="#d8dce2"/>
</svg>
<div class="t" style="left:435.5px;top:44.80px;font-size:6.4px;color:#dde0e6">-BRDR</div>
<div class="t" style="left:435.5px;top:57.63px;font-size:6.4px;color:#dde0e6">-fill-shade</div>
<div class="t" style="left:435.5px;top:70.46px;font-size:6.4px;color:#dde0e6">-fill-shade-4</div>
<div class="t" style="left:435.5px;top:83.29px;font-size:6.4px;color:#dde0e6">-fill-shade2</div>
<div class="t" style="left:435.5px;top:96.12px;font-size:6.4px;color:#dde0e6">-fill-shade3</div>
<div class="t" style="left:435.5px;top:108.95px;font-size:6.4px;color:#dde0e6">-MED</div>
<div class="t" style="left:435.5px;top:121.78px;font-size:6.4px;color:#dde0e6">-VIEWPORT</div>
<div class="t" style="left:435.5px;top:134.61px;font-size:6.4px;color:#dde0e6">-XREF</div>
<div class="t" style="left:435.5px;top:147.44px;font-size:6.4px;color:#dde0e6">_Hide Area Boundaries</div>
<div class="t" style="left:435.5px;top:160.27px;font-size:6.4px;color:#dde0e6">_Hide Construcion Lines</div>
<div class="t" style="left:435.5px;top:173.10px;font-size:6.4px;color:#dde0e6">0</div>
<div class="t" style="left:435.5px;top:185.93px;font-size:6.4px;color:#dde0e6">1-1</div>
<div class="t" style="left:435.5px;top:198.76px;font-size:6.4px;color:#dde0e6">2-1</div>
<div class="t" style="left:435.5px;top:211.59px;font-size:6.4px;color:#dde0e6">3-1</div>
<div class="t" style="left:435.5px;top:224.42px;font-size:6.4px;color:#dde0e6">A-CLMN-PLAN</div>
<div class="t" style="left:435.5px;top:237.25px;font-size:6.4px;color:#dde0e6">A-DIM00</div>
<div class="t" style="left:435.5px;top:250.08px;font-size:6.4px;color:#dde0e6">A-DIMS-SITE</div>
<div class="t" style="left:435.5px;top:262.91px;font-size:6.4px;color:#dde0e6">A-SYMB-GRID</div>
<div class="t" style="left:435.5px;top:275.74px;font-size:6.4px;color:#dde0e6">A-WPL00</div>
<div class="t" style="left:435.5px;top:288.57px;font-size:6.4px;color:#dde0e6">A-WPL01</div>
<div class="t" style="left:435.5px;top:301.40px;font-size:6.4px;color:#dde0e6">ASHADE</div>
<div class="t" style="left:435.5px;top:314.23px;font-size:6.4px;color:#dde0e6">Brick</div>
<div class="t" style="left:435.5px;top:327.06px;font-size:6.4px;color:#dde0e6">ColonterLin00</div>
<div class="t" style="left:435.5px;top:339.89px;font-size:6.4px;color:#dde0e6">Dimension</div>
<div class="t" style="left:435.5px;top:352.72px;font-size:6.4px;color:#dde0e6">DOOR</div>
<div class="t" style="left:435.5px;top:365.55px;font-size:6.4px;color:#dde0e6">ELEVATION1</div>
<div class="t" style="left:435.5px;top:378.38px;font-size:6.4px;color:#dde0e6">EXTRA</div>
<div class="t" style="left:435.5px;top:391.21px;font-size:6.4px;color:#dde0e6">FENCE</div>
<div class="t" style="left:435.5px;top:404.04px;font-size:6.4px;color:#dde0e6">XCADSTHERMAL</div>
<div class="t" style="left:435.5px;top:416.87px;font-size:6.4px;color:#dde0e6">Logo</div>
<div class="t" style="left:433.5px;top:32px;font-size:6.4px;color:#e6e9ee">Text</div>
<svg style="left:0;top:0" width="520" height="80"><path d="M505 54.8v8.4l2-1.8 1.3 2.8 1-.5-1.3-2.7 2.8-.2z" fill="#f4f4f4" stroke="#222" stroke-width="0.4"/></svg>
<!-- END DD -->
<!-- blue borders -->
<div class="a" style="left:0;top:1px;width:1024px;height:1px;background:#142a3c"></div>
<div class="a" style="left:1px;top:0;width:1px;height:576px;background:#142a3c"></div>
<div class="a" style="left:0;top:573px;width:1024px;height:1px;background:#142a3c"></div>
<div class="a" style="left:0;top:0;width:1024px;height:1px;background:#2e7090"></div>
<div class="a" style="left:0;top:0;width:1px;height:576px;background:#2e7090"></div>
<div class="a" style="left:0;top:574px;width:1024px;height:2px;background:#2e7090"></div>
</body></html>
